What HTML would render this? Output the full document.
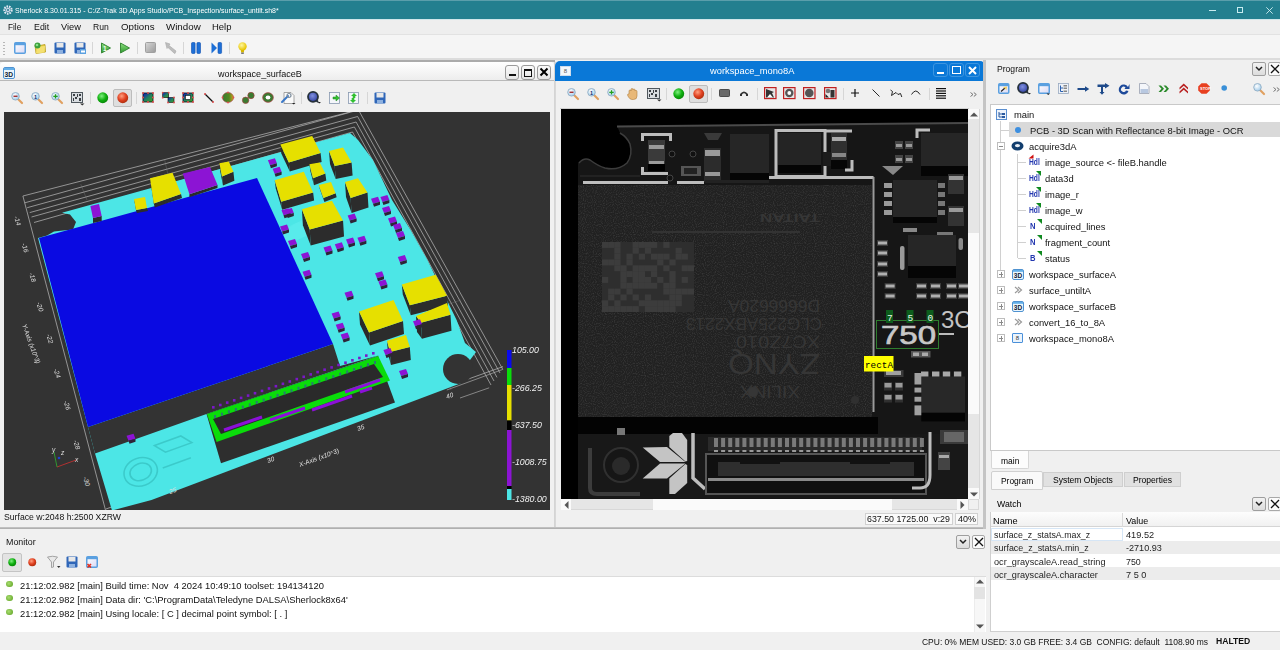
<!DOCTYPE html><html><head><meta charset="utf-8"><style>
*{margin:0;padding:0;box-sizing:border-box}
html,body{width:1280px;height:650px;overflow:hidden;background:#f0f0f0;font-family:"Liberation Sans", sans-serif;color:#000}
.a{position:absolute}
.t{position:absolute;white-space:pre;transform-origin:0 0}
svg{position:absolute;overflow:visible}
</style></head><body>
<div class="a" style="left:0px;top:0px;width:1280px;height:19px;background:#237f8f"></div>
<div class="a" style="left:0px;top:0px;width:1280px;height:1px;background:#5a9eab"></div>
<div class="a" style="left:0px;top:19px;width:1280px;height:1px;background:#cfe6ea"></div>
<div class="t" style="left:15.2px;top:6.64px;font-size:7.4px;line-height:7.4px;transform:scaleX(0.9476);color:#fff">Sherlock 8.30.01.315 - C:/Z-Trak 3D Apps Studio/PCB_Inspection/surface_untilt.sh8*</div>
<svg style="left:3px;top:5px" width="10" height="10" viewBox="0 0 10 10"><circle cx="5" cy="5" r="3.6" fill="none" stroke="#dfe6f2" stroke-width="2.2" stroke-dasharray="1.6 0.9"/><circle cx="5" cy="5" r="2.2" fill="#c9d3e6"/><circle cx="5" cy="5" r="1" fill="#237f8f"/></svg>
<div class="a" style="left:1209px;top:10px;width:7px;height:1px;background:#c8ecf0"></div>
<div class="a" style="left:1237px;top:7px;width:6px;height:6px;border:1px solid #c8ecf0"></div>
<svg style="left:1265.5px;top:7px" width="7" height="7"><path d="M0.3 0.3L6.7 6.7M6.7 0.3L0.3 6.7" stroke="#d0eef2" stroke-width="0.9"/></svg>
<div class="a" style="left:0px;top:20px;width:1280px;height:14px;background:#eeeeee"></div>
<div class="a" style="left:0px;top:34px;width:1280px;height:1px;background:#e2e2e2"></div>
<div class="t" style="left:7.7px;top:23.45px;font-size:8.8px;line-height:8.8px;transform:scaleX(0.9379);color:#111">File</div>
<div class="t" style="left:33.5px;top:23.45px;font-size:8.8px;line-height:8.8px;transform:scaleX(1.0024);color:#111">Edit</div>
<div class="t" style="left:61.4px;top:23.45px;font-size:8.8px;line-height:8.8px;transform:scaleX(1.0520);color:#111">View</div>
<div class="t" style="left:93.2px;top:23.45px;font-size:8.8px;line-height:8.8px;transform:scaleX(0.9787);color:#111">Run</div>
<div class="t" style="left:121px;top:23.45px;font-size:8.8px;line-height:8.8px;transform:scaleX(1.1079);color:#111">Options</div>
<div class="t" style="left:166px;top:23.45px;font-size:8.8px;line-height:8.8px;transform:scaleX(1.1087);color:#111">Window</div>
<div class="t" style="left:212.4px;top:23.45px;font-size:8.8px;line-height:8.8px;transform:scaleX(1.0774);color:#111">Help</div>
<div class="a" style="left:0px;top:35px;width:1280px;height:23px;background:#f5f5f5"></div>
<div class="a" style="left:0px;top:58px;width:1280px;height:2px;background:#dcdcdc"></div>
<div class="a" style="left:0px;top:60px;width:555px;height:2px;background:#ababab"></div>
<div class="a" style="left:0px;top:62px;width:555px;height:466px;background:#f0f0f0;border-right:1px solid #d4d4d4"></div>
<div class="a" style="left:0px;top:62px;width:554px;height:19px;background:linear-gradient(#ffffff,#ececec);border-radius:4px 4px 0 0"></div>
<div class="a" style="left:0px;top:80px;width:554px;height:1px;background:#b9b9b9"></div>
<div class="t" style="left:218.4px;top:69.24px;font-size:9.4px;line-height:9.4px;transform:scaleX(0.9627);color:#111">workspace_surfaceB</div>
<svg style="left:3px;top:67px" width="12" height="12"><rect x="0.5" y="0.5" width="11" height="11" rx="1.5" fill="#eaf6fe" stroke="#4f92d0"/><rect x="1" y="1" width="10" height="2" fill="#62aee8"/><text x="1.6" y="9.8" font-family="Liberation Sans" font-weight="bold" font-size="7" fill="#111a33" textLength="8.6" lengthAdjust="spacingAndGlyphs">3D</text></svg>
<div class="a" style="left:505px;top:65px;width:14px;height:15px;background:linear-gradient(#fafafa,#e6e6e6);border:1px solid #9a9a9a;border-radius:3px"></div>
<div class="a" style="left:521px;top:65px;width:14px;height:15px;background:linear-gradient(#fafafa,#e6e6e6);border:1px solid #9a9a9a;border-radius:3px"></div>
<div class="a" style="left:537px;top:65px;width:14px;height:15px;background:linear-gradient(#fafafa,#e6e6e6);border:1px solid #9a9a9a;border-radius:3px"></div>
<div class="a" style="left:509px;top:74px;width:7px;height:2px;background:#111"></div>
<div class="a" style="left:524px;top:69px;width:8px;height:8px;border:1px solid #111;border-top-width:2px"></div>
<svg style="left:540px;top:68px" width="8" height="8"><path d="M0.5 0.5L7.5 7.5M7.5 0.5L0.5 7.5" stroke="#000" stroke-width="2"/></svg>
<div class="a" style="left:4px;top:112px;width:546px;height:398px;background:#333333"></div>
<div class="t" style="left:4px;top:513.18px;font-size:9.0px;line-height:9.0px;transform:scaleX(0.9637);color:#111">Surface w:2048 h:2500 XZRW</div>
<div class="a" style="left:0px;top:527px;width:555px;height:2px;background:linear-gradient(#c8c8c8,#a8a8a8)"></div>
<div class="a" style="left:555px;top:62px;width:430px;height:466px;background:#f0f0f0;border-left:1px solid #d8d8d8;border-right:1px solid #d8d8d8"></div>
<div class="a" style="left:555px;top:61px;width:430px;height:20px;background:#0a78d7;border-radius:5px 5px 0 0"></div>
<div class="t" style="left:710.2px;top:65.74px;font-size:9.4px;line-height:9.4px;transform:scaleX(0.9933);color:#fff">workspace_mono8A</div>
<div class="a" style="left:560px;top:66px;width:11px;height:10px;background:#f4f7fb;border:1px solid #cfdcec;font-size:6px;line-height:8px;text-align:center;color:#555">8</div>
<div class="a" style="left:933px;top:63px;width:15px;height:14px;background:#0a78d7;border:1px solid #3d95e0;border-radius:3px"></div>
<div class="a" style="left:949px;top:63px;width:15px;height:14px;background:#0a78d7;border:1px solid #3d95e0;border-radius:3px"></div>
<div class="a" style="left:965px;top:63px;width:15px;height:14px;background:#0a78d7;border:1px solid #3d95e0;border-radius:3px"></div>
<div class="a" style="left:937px;top:72px;width:7px;height:2px;background:#fff"></div>
<div class="a" style="left:952px;top:66px;width:9px;height:8px;border:1.5px solid #fff"></div>
<svg style="left:968px;top:66px" width="9" height="9"><path d="M1 1L8 8M8 1L1 8" stroke="#fff" stroke-width="2"/></svg>
<div class="a" style="left:561px;top:109px;width:407px;height:390px;background:#000"></div>
<div class="a" style="left:560px;top:108px;width:409px;height:1px;background:#cfcfcf"></div>
<div class="a" style="left:968px;top:109px;width:12px;height:390px;background:#e6e6e6;border-right:1px solid #d8d8d8"></div>
<div class="a" style="left:968px;top:109px;width:11px;height:10px;background:#fafafa"></div>
<svg style="left:970px;top:112px" width="8" height="5"><path d="M0 4.5L4 0.5L8 4.5Z" fill="#555"/></svg>
<div class="a" style="left:968px;top:233px;width:11px;height:181px;background:#fafafa"></div>
<div class="a" style="left:968px;top:488px;width:11px;height:11px;background:#fafafa"></div>
<svg style="left:970px;top:491.5px" width="8" height="5"><path d="M0 0.5L4 4.5L8 0.5Z" fill="#555"/></svg>
<div class="a" style="left:561px;top:499px;width:407px;height:11px;background:#e6e6e6;border-bottom:1px solid #d8d8d8"></div>
<div class="a" style="left:561px;top:499px;width:10px;height:11px;background:#fafafa"></div>
<svg style="left:564px;top:501px" width="5" height="8"><path d="M4.5 0L0.5 4L4.5 8Z" fill="#555"/></svg>
<div class="a" style="left:653px;top:499px;width:239px;height:11px;background:#fafafa"></div>
<div class="a" style="left:957px;top:499px;width:11px;height:11px;background:#fafafa"></div>
<svg style="left:960px;top:501px" width="5" height="8"><path d="M0.5 0L4.5 4L0.5 8Z" fill="#555"/></svg>
<div class="a" style="left:968px;top:499px;width:11px;height:11px;background:#f0f0f0;border:1px solid #d8d8d8"></div>
<div class="a" style="left:865px;top:513px;width:88px;height:12px;background:#fafafa;border:1px solid #d0d0d0"></div>
<div class="t" style="left:867px;top:514.71px;font-size:9.2px;line-height:9.2px;transform:scaleX(0.9601);color:#111">637.50 1725.00  v:29</div>
<div class="a" style="left:955px;top:513px;width:23px;height:12px;background:#fafafa;border:1px solid #d0d0d0"></div>
<div class="t" style="left:958px;top:514.71px;font-size:9.2px;line-height:9.2px;transform:scaleX(0.9775);color:#111">40%</div>
<div class="a" style="left:555px;top:527px;width:430px;height:2px;background:linear-gradient(#c8c8c8,#a8a8a8)"></div>
<div class="a" style="left:983px;top:60px;width:3px;height:469px;background:#c4c4c4"></div>
<div class="a" style="left:987px;top:62px;width:293px;height:570px;background:#f0f0f0"></div>
<div class="t" style="left:996.5px;top:65.01px;font-size:9.2px;line-height:9.2px;transform:scaleX(0.9354);color:#111">Program</div>
<div class="a" style="left:1252px;top:62px;width:14px;height:14px;background:linear-gradient(#f2f2f2,#dcdcdc);border:1px solid #9e9e9e;border-radius:2px"></div>
<svg style="left:1255px;top:66px" width="8" height="6"><path d="M1 1L4 4L7 1" fill="none" stroke="#222" stroke-width="1.5"/></svg>
<div class="a" style="left:1267.5px;top:62px;width:13.5px;height:14px;background:#fbfbfb;border:1px solid #a8a8a8;border-radius:2px"></div>
<svg style="left:1269.5px;top:64px" width="10" height="10"><path d="M1 1L9 9M9 1L1 9" stroke="#111" stroke-width="1.3"/></svg>
<div class="a" style="left:990px;top:104px;width:290px;height:347px;background:#fff;border:1px solid #c9c9c9;border-right:none"></div>
<div class="a" style="left:991px;top:451px;width:38px;height:18px;background:#fcfcfc;border:1px solid #d6d6d6;border-top:none;border-radius:0 0 2px 2px"></div>
<div class="t" style="left:1000.6px;top:456.24px;font-size:9.4px;line-height:9.4px;transform:scaleX(0.9031);">main</div>
<div class="a" style="left:991px;top:471px;width:52px;height:19px;background:#f9f9f9;border:1px solid #d0d0d0;border-radius:2px 2px 0 0"></div>
<div class="t" style="left:1000.6px;top:476.04px;font-size:9.4px;line-height:9.4px;transform:scaleX(0.8988);">Program</div>
<div class="a" style="left:1043px;top:472px;width:80px;height:15px;background:#e1e1e1;border:1px solid #cfcfcf"></div>
<div class="t" style="left:1053px;top:475.44px;font-size:9.4px;line-height:9.4px;transform:scaleX(0.9116);">System Objects</div>
<div class="a" style="left:1124px;top:472px;width:57px;height:15px;background:#e1e1e1;border:1px solid #cfcfcf"></div>
<div class="t" style="left:1132.6px;top:475.44px;font-size:9.4px;line-height:9.4px;transform:scaleX(0.9126);">Properties</div>
<div class="t" style="left:996.7px;top:498.94px;font-size:9.4px;line-height:9.4px;transform:scaleX(0.9319);">Watch</div>
<div class="a" style="left:1252px;top:497px;width:14px;height:14px;background:linear-gradient(#f2f2f2,#dcdcdc);border:1px solid #9e9e9e;border-radius:2px"></div>
<svg style="left:1255px;top:501px" width="8" height="6"><path d="M1 1L4 4L7 1" fill="none" stroke="#222" stroke-width="1.5"/></svg>
<div class="a" style="left:1267.5px;top:497px;width:13.5px;height:14px;background:#fbfbfb;border:1px solid #a8a8a8;border-radius:2px"></div>
<svg style="left:1269.5px;top:499px" width="10" height="10"><path d="M1 1L9 9M9 1L1 9" stroke="#111" stroke-width="1.3"/></svg>
<div class="a" style="left:990px;top:512px;width:290px;height:120px;background:#fff;border:1px solid #cfcfcf;border-right:none"></div>
<div class="a" style="left:991px;top:512px;width:289px;height:15px;background:linear-gradient(#fdfdfd,#f1f1f1);border-bottom:1px solid #d5d5d5"></div>
<div class="a" style="left:1122px;top:513px;width:1px;height:14px;background:#dadada"></div>
<div class="t" style="left:993.4px;top:516.44px;font-size:9.4px;line-height:9.4px;transform:scaleX(0.9810);">Name</div>
<div class="t" style="left:1125.6px;top:516.44px;font-size:9.4px;line-height:9.4px;transform:scaleX(0.9510);">Value</div>
<div class="a" style="left:991px;top:527.4px;width:289px;height:13.1px;background:#fff"></div>
<div class="t" style="left:993.5px;top:530.34px;font-size:9.4px;line-height:9.4px;transform:scaleX(0.9414);color:#1e1e1e">surface_z_statsA.max_z</div>
<div class="t" style="left:1125.8px;top:530.34px;font-size:9.4px;line-height:9.4px;transform:scaleX(0.9808);color:#1e1e1e">419.52</div>
<div class="a" style="left:991px;top:540.5px;width:289px;height:13.1px;background:#ececec"></div>
<div class="t" style="left:993.5px;top:543.44px;font-size:9.4px;line-height:9.4px;transform:scaleX(0.9520);color:#1e1e1e">surface_z_statsA.min_z</div>
<div class="t" style="left:1126.4px;top:543.44px;font-size:9.4px;line-height:9.4px;transform:scaleX(0.9674);color:#1e1e1e">-2710.93</div>
<div class="a" style="left:991px;top:553.6px;width:289px;height:13.1px;background:#fff"></div>
<div class="t" style="left:993.5px;top:556.54px;font-size:9.4px;line-height:9.4px;transform:scaleX(0.9770);color:#1e1e1e">ocr_grayscaleA.read_string</div>
<div class="t" style="left:1126.4px;top:556.54px;font-size:9.4px;line-height:9.4px;transform:scaleX(0.9436);color:#1e1e1e">750</div>
<div class="a" style="left:991px;top:566.6999999999999px;width:289px;height:13.1px;background:#ececec"></div>
<div class="t" style="left:993.5px;top:569.64px;font-size:9.4px;line-height:9.4px;transform:scaleX(0.9767);color:#1e1e1e">ocr_grayscaleA.character</div>
<div class="t" style="left:1126.4px;top:569.64px;font-size:9.4px;line-height:9.4px;transform:scaleX(0.9758);color:#1e1e1e">7 5 0</div>
<div class="a" style="left:991px;top:527.5px;width:132px;height:13px;border:1px solid #d6e6f6"></div>
<div class="t" style="left:5.6px;top:538.27px;font-size:8.9px;line-height:8.9px;transform:scaleX(1.0001);color:#111">Monitor</div>
<div class="a" style="left:956px;top:535px;width:14px;height:14px;background:linear-gradient(#f2f2f2,#dcdcdc);border:1px solid #9e9e9e;border-radius:2px"></div>
<svg style="left:959px;top:539px" width="8" height="6"><path d="M1 1L4 4L7 1" fill="none" stroke="#222" stroke-width="1.5"/></svg>
<div class="a" style="left:971.5px;top:535px;width:13.5px;height:14px;background:#fbfbfb;border:1px solid #a8a8a8;border-radius:2px"></div>
<svg style="left:973.5px;top:537px" width="10" height="10"><path d="M1 1L9 9M9 1L1 9" stroke="#111" stroke-width="1.3"/></svg>
<div class="a" style="left:2px;top:553px;width:20px;height:19px;background:#e3e3e3;border:1px solid #c4c4c4;border-radius:2px"></div>
<div class="a" style="left:0px;top:576px;width:986px;height:56px;background:#fff;border-top:1px solid #dcdcdc"></div>
<div class="a" style="left:6px;top:580.6px;width:6.5px;height:6.5px;border-radius:50%;background:radial-gradient(circle at 40% 40%,#a8dd70,#5a9e1e)"></div>
<div class="t" style="left:20.15px;top:580.64px;font-size:9.4px;line-height:9.4px;transform:scaleX(1.0001);color:#111">21:12:02.982 [main] Build time: Nov  4 2024 10:49:10 toolset: 194134120</div>
<div class="a" style="left:6px;top:594.6px;width:6.5px;height:6.5px;border-radius:50%;background:radial-gradient(circle at 40% 40%,#a8dd70,#5a9e1e)"></div>
<div class="t" style="left:20.15px;top:594.64px;font-size:9.4px;line-height:9.4px;transform:scaleX(1.0001);color:#111">21:12:02.982 [main] Data dir: &#x27;C:\ProgramData\Teledyne DALSA\Sherlock8x64&#x27;</div>
<div class="a" style="left:6px;top:608.6px;width:6.5px;height:6.5px;border-radius:50%;background:radial-gradient(circle at 40% 40%,#a8dd70,#5a9e1e)"></div>
<div class="t" style="left:20.15px;top:608.64px;font-size:9.4px;line-height:9.4px;transform:scaleX(1.0001);color:#111">21:12:02.982 [main] Using locale: [ C ] decimal point symbol: [ . ]</div>
<div class="a" style="left:974px;top:577px;width:11px;height:55px;background:#f7f7f7;border-left:1px solid #ececec"></div>
<svg style="left:976px;top:579px" width="8" height="5"><path d="M0 4.5L4 0.5L8 4.5Z" fill="#555"/></svg>
<div class="a" style="left:974px;top:587px;width:11px;height:12px;background:#e3e3e3"></div>
<svg style="left:976px;top:624px" width="8" height="5"><path d="M0 0.5L4 4.5L8 0.5Z" fill="#555"/></svg>
<div class="a" style="left:0px;top:632px;width:1280px;height:18px;background:#f0f0f0"></div>
<div class="t" style="left:922px;top:637.68px;font-size:9.0px;line-height:9.0px;transform:scaleX(0.9410);color:#111">CPU: 0% MEM USED: 3.0 GB FREE: 3.4 GB  CONFIG: default  1108.90 ms</div>
<div class="t" style="left:1216.25px;top:637.47px;font-size:8.9px;line-height:8.9px;font-weight:bold;transform:scaleX(0.9709);color:#111">HALTED</div>
<svg style="left:4px;top:112px" width="546" height="398" viewBox="4 112 546 398"><defs><clipPath id="c3"><rect x="4" y="112" width="546" height="398"/></clipPath></defs><g clip-path="url(#c3)">
<rect x="4" y="112" width="546" height="398" fill="#333333"/>
<line x1="22.9" y1="196" x2="349.9" y2="112" stroke="#bdbdbd" stroke-width="0.7"/>
<polyline points="24.8,202.8 380,104" fill="none" stroke="#bdbdbd" stroke-width="0.7"/>
<line x1="359.6" y1="112" x2="502.8" y2="369.4" stroke="#bdbdbd" stroke-width="0.7"/>
<polyline points="27.2,207.7 357.6,116.5 500.0,373.0" fill="none" stroke="#bdbdbd" stroke-width="0.7"/>
<polyline points="29.7,212.6 356.1,122.0 497.0,377.4" fill="none" stroke="#bdbdbd" stroke-width="0.7"/>
<polyline points="31.5,217.0 354.4,127.0 494.0,381.0" fill="none" stroke="#bdbdbd" stroke-width="0.7"/>
<polyline points="34.0,222.5 352.5,132.0 491.0,385.0" fill="none" stroke="#bdbdbd" stroke-width="0.7"/>
<line x1="502.8" y1="369.4" x2="446.8" y2="390" stroke="#bdbdbd" stroke-width="0.6"/>
<line x1="489.2" y1="387.8" x2="460" y2="398" stroke="#bdbdbd" stroke-width="0.6"/>
<line x1="22.9" y1="196" x2="106" y2="512" stroke="#bdbdbd" stroke-width="0.7"/>
<line x1="106" y1="509" x2="503" y2="366.6" stroke="#bdbdbd" stroke-width="0.7"/>
<line x1="152" y1="407.6" x2="460.7" y2="300" stroke="#8a8a8a" stroke-width="0.5" opacity="0.6"/>
<line x1="150.7" y1="406" x2="160" y2="445" stroke="#8a8a8a" stroke-width="0.5" opacity="0.6"/>
<line x1="258" y1="380" x2="270" y2="455" stroke="#8a8a8a" stroke-width="0.5" opacity="0.6"/>
<line x1="345" y1="350" x2="362" y2="421" stroke="#8a8a8a" stroke-width="0.5" opacity="0.6"/>
<line x1="430" y1="322" x2="451" y2="390" stroke="#8a8a8a" stroke-width="0.5" opacity="0.6"/>
<line x1="63" y1="250" x2="351" y2="150" stroke="#8a8a8a" stroke-width="0.5" opacity="0.6"/>
<line x1="80.7" y1="184" x2="87" y2="200" stroke="#8a8a8a" stroke-width="0.5" opacity="0.6"/>
<line x1="164.7" y1="160" x2="168" y2="175" stroke="#8a8a8a" stroke-width="0.5" opacity="0.6"/>
<line x1="80" y1="300" x2="300" y2="220" stroke="#8a8a8a" stroke-width="0.5" opacity="0.6"/>
<polygon points="38.0,238.0 47.0,235.5 54.0,231.5 63.0,230.5 73.0,229.5 76.0,222.0 70.0,214.5 62.0,212.8 350.0,133.0 358.0,140.0 372.9,160.0 392.0,200.0 410.6,230.0 427.4,260.0 456.6,320.0 465.0,343.0 476.0,352.0 470.0,360.0 461.0,383.0 457.5,384.6 151.5,500.0 112.0,510.5 95.0,453.5 88.0,427.0" fill="#4ce6e6"/>
<g transform="rotate(-20 140 470)" fill="none" stroke="#38c4c4" stroke-width="1.6" opacity="0.8"><ellipse cx="140" cy="472" rx="17" ry="14"/><ellipse cx="140" cy="472" rx="11" ry="8.5"/><path d="M162 452 L190 452 L198 462 L170 462 Z"/><path d="M162 476 L192 476"/></g>
<g opacity="0.35"><ellipse cx="300" cy="230" rx="30" ry="8" fill="#70f4f4" transform="rotate(-25 300 230)"/><ellipse cx="420" cy="300" rx="20" ry="6" fill="#70f4f4" transform="rotate(60 420 300)"/></g>
<polygon points="88.0,427.0 333.0,344.0 340.0,366.0 380.0,355.0 206.5,414.0 95.0,453.5" fill="#333333"/>
<circle cx="458" cy="369" r="15" fill="#333333"/>
<rect x="440" y="362" width="40" height="16" fill="none"/>
<polygon points="39.0,238.0 257.0,178.0 333.0,344.0 88.0,427.0" fill="#0a0ae2"/>
<polygon points="206.5,414.0 378.0,356.0 395.0,402.6 221.0,463.3" fill="#2e2e2e"/>
<polygon points="206.9,414.0 378.2,355.9 390.0,380.6 216.6,442.0" fill="#0adc0a"/>
<polygon points="213.0,419.0 374.0,364.0 383.0,377.0 221.0,434.0" fill="#2a2a2a"/>
<line x1="224" y1="430" x2="262" y2="417" stroke="#8c10d8" stroke-width="3"/>
<line x1="270" y1="420" x2="305" y2="408" stroke="#8c10d8" stroke-width="3"/>
<line x1="312" y1="410" x2="352" y2="396" stroke="#8c10d8" stroke-width="3"/>
<line x1="360" y1="392" x2="372" y2="388" stroke="#8c10d8" stroke-width="3"/>
<line x1="345" y1="392" x2="380" y2="380" stroke="#8c10d8" stroke-width="3"/>
<rect x="212.0" y="406.0" width="2.6" height="2.6" fill="#7a18c8"/>
<rect x="214.0" y="415.0" width="2" height="3" fill="#2a7a70"/>
<rect x="219.0" y="403.7" width="2.6" height="2.6" fill="#7a18c8"/>
<rect x="221.0" y="412.7" width="2" height="3" fill="#2a7a70"/>
<rect x="225.9" y="401.3" width="2.6" height="2.6" fill="#7a18c8"/>
<rect x="227.9" y="410.3" width="2" height="3" fill="#2a7a70"/>
<rect x="232.9" y="399.0" width="2.6" height="2.6" fill="#7a18c8"/>
<rect x="234.9" y="408.0" width="2" height="3" fill="#2a7a70"/>
<rect x="239.8" y="396.6" width="2.6" height="2.6" fill="#7a18c8"/>
<rect x="241.8" y="405.6" width="2" height="3" fill="#2a7a70"/>
<rect x="246.8" y="394.3" width="2.6" height="2.6" fill="#7a18c8"/>
<rect x="248.8" y="403.3" width="2" height="3" fill="#2a7a70"/>
<rect x="253.7" y="391.9" width="2.6" height="2.6" fill="#7a18c8"/>
<rect x="255.7" y="400.9" width="2" height="3" fill="#2a7a70"/>
<rect x="260.7" y="389.6" width="2.6" height="2.6" fill="#7a18c8"/>
<rect x="262.7" y="398.6" width="2" height="3" fill="#2a7a70"/>
<rect x="267.7" y="387.2" width="2.6" height="2.6" fill="#7a18c8"/>
<rect x="269.7" y="396.2" width="2" height="3" fill="#2a7a70"/>
<rect x="274.6" y="384.9" width="2.6" height="2.6" fill="#7a18c8"/>
<rect x="276.6" y="393.9" width="2" height="3" fill="#2a7a70"/>
<rect x="281.6" y="382.5" width="2.6" height="2.6" fill="#7a18c8"/>
<rect x="283.6" y="391.5" width="2" height="3" fill="#2a7a70"/>
<rect x="288.5" y="380.2" width="2.6" height="2.6" fill="#7a18c8"/>
<rect x="290.5" y="389.2" width="2" height="3" fill="#2a7a70"/>
<rect x="295.5" y="377.8" width="2.6" height="2.6" fill="#7a18c8"/>
<rect x="297.5" y="386.8" width="2" height="3" fill="#2a7a70"/>
<rect x="302.4" y="375.5" width="2.6" height="2.6" fill="#7a18c8"/>
<rect x="304.4" y="384.5" width="2" height="3" fill="#2a7a70"/>
<rect x="309.4" y="373.1" width="2.6" height="2.6" fill="#7a18c8"/>
<rect x="311.4" y="382.1" width="2" height="3" fill="#2a7a70"/>
<rect x="316.3" y="370.8" width="2.6" height="2.6" fill="#7a18c8"/>
<rect x="318.3" y="379.8" width="2" height="3" fill="#2a7a70"/>
<rect x="323.3" y="368.4" width="2.6" height="2.6" fill="#7a18c8"/>
<rect x="325.3" y="377.4" width="2" height="3" fill="#2a7a70"/>
<rect x="330.3" y="366.1" width="2.6" height="2.6" fill="#7a18c8"/>
<rect x="332.3" y="375.1" width="2" height="3" fill="#2a7a70"/>
<rect x="337.2" y="363.7" width="2.6" height="2.6" fill="#7a18c8"/>
<rect x="339.2" y="372.7" width="2" height="3" fill="#2a7a70"/>
<rect x="344.2" y="361.4" width="2.6" height="2.6" fill="#7a18c8"/>
<rect x="346.2" y="370.4" width="2" height="3" fill="#2a7a70"/>
<rect x="351.1" y="359.0" width="2.6" height="2.6" fill="#7a18c8"/>
<rect x="353.1" y="368.0" width="2" height="3" fill="#2a7a70"/>
<rect x="358.1" y="356.7" width="2.6" height="2.6" fill="#7a18c8"/>
<rect x="360.1" y="365.7" width="2" height="3" fill="#2a7a70"/>
<rect x="365.0" y="354.3" width="2.6" height="2.6" fill="#7a18c8"/>
<rect x="367.0" y="363.3" width="2" height="3" fill="#2a7a70"/>
<rect x="372.0" y="352.0" width="2.6" height="2.6" fill="#7a18c8"/>
<rect x="374.0" y="361.0" width="2" height="3" fill="#2a7a70"/>
<polygon points="288.8,162.4 320.6,153.0 321.6,162.0 289.8,171.4" fill="#2c2c2c"/>
<polygon points="280.3,144.6 288.8,162.4 289.8,171.4 281.3,153.6" fill="#2a2a2a"/>
<polygon points="280.3,144.6 312.2,136.0 320.6,153.0 288.8,162.4" fill="#e6e000"/>
<polygon points="153.8,203.6 181.0,194.0 182.0,198.0 154.8,207.6" fill="#2c2c2c"/>
<polygon points="150.0,178.3 153.8,203.6 154.8,207.6 151.0,182.3" fill="#2a2a2a"/>
<polygon points="150.0,178.3 172.5,172.7 181.0,194.0 153.8,203.6" fill="#e6e000"/>
<polygon points="222.0,176.4 233.4,171.8 234.4,180.8 223.0,185.4" fill="#2c2c2c"/>
<polygon points="219.4,163.3 222.0,176.4 223.0,185.4 220.4,172.3" fill="#2a2a2a"/>
<polygon points="219.4,163.3 228.8,161.4 233.4,171.8 222.0,176.4" fill="#e6e000"/>
<polygon points="281.2,201.8 313.1,192.4 314.1,200.4 282.2,209.8" fill="#2c2c2c"/>
<polygon points="274.7,180.2 281.2,201.8 282.2,209.8 275.7,188.2" fill="#2a2a2a"/>
<polygon points="274.7,180.2 303.8,171.8 313.1,192.4 281.2,201.8" fill="#e6e000"/>
<polygon points="313.0,178.3 325.3,173.6 326.3,180.6 314.0,185.3" fill="#2c2c2c"/>
<polygon points="309.4,164.2 313.0,178.3 314.0,185.3 310.4,171.2" fill="#2a2a2a"/>
<polygon points="309.4,164.2 319.7,162.4 325.3,173.6 313.0,178.3" fill="#e6e000"/>
<polygon points="323.4,198.0 335.6,193.3 336.6,197.3 324.4,202.0" fill="#2c2c2c"/>
<polygon points="318.8,184.9 323.4,198.0 324.4,202.0 319.8,188.9" fill="#2a2a2a"/>
<polygon points="318.8,184.9 331.0,182.0 335.6,193.3 323.4,198.0" fill="#e6e000"/>
<polygon points="334.7,166.0 351.6,162.4 352.6,175.4 335.7,179.0" fill="#2c2c2c"/>
<polygon points="329.0,151.0 334.7,166.0 335.7,179.0 330.0,164.0" fill="#2a2a2a"/>
<polygon points="329.0,151.0 343.0,147.4 351.6,162.4 334.7,166.0" fill="#e6e000"/>
<polygon points="350.6,198.0 367.5,192.4 368.5,207.4 351.6,213.0" fill="#2c2c2c"/>
<polygon points="345.0,182.0 350.6,198.0 351.6,213.0 346.0,197.0" fill="#2a2a2a"/>
<polygon points="345.0,182.0 358.0,178.3 367.5,192.4 350.6,198.0" fill="#e6e000"/>
<polygon points="309.7,229.5 343.0,220.5 344.0,236.5 310.7,245.5" fill="#2c2c2c"/>
<polygon points="301.9,209.2 309.7,229.5 310.7,245.5 302.9,225.2" fill="#2a2a2a"/>
<polygon points="301.9,209.2 331.9,200.8 343.0,220.5 309.7,229.5" fill="#e6e000"/>
<polygon points="136.0,210.0 147.0,208.0 148.0,211.0 137.0,213.0" fill="#2c2c2c"/>
<polygon points="134.0,199.0 136.0,210.0 137.0,213.0 135.0,202.0" fill="#2a2a2a"/>
<polygon points="134.0,199.0 145.0,197.0 147.0,208.0 136.0,210.0" fill="#e6e000"/>
<polygon points="409.8,305.3 447.0,295.7 448.0,305.7 410.8,315.3" fill="#2c2c2c"/>
<polygon points="401.8,284.4 409.8,305.3 410.8,315.3 402.8,294.4" fill="#2a2a2a"/>
<polygon points="401.8,284.4 435.7,274.7 447.0,295.7 409.8,305.3" fill="#e6e000"/>
<polygon points="369.0,332.6 403.0,321.0 404.0,334.0 370.0,345.6" fill="#2c2c2c"/>
<polygon points="359.0,311.4 369.0,332.6 370.0,345.6 360.0,324.4" fill="#2a2a2a"/>
<polygon points="359.0,311.4 393.5,300.0 403.0,321.0 369.0,332.6" fill="#e6e000"/>
<polygon points="421.0,322.8 450.5,314.7 451.5,330.7 422.0,338.8" fill="#2c2c2c"/>
<polygon points="416.0,316.0 421.0,322.8 422.0,338.8 417.0,332.0" fill="#2a2a2a"/>
<polygon points="416.0,316.0 447.0,303.0 450.5,314.7 421.0,322.8" fill="#e6e000"/>
<polygon points="390.0,352.0 409.8,347.0 410.8,360.0 391.0,365.0" fill="#2c2c2c"/>
<polygon points="387.0,340.8 390.0,352.0 391.0,365.0 388.0,353.8" fill="#2a2a2a"/>
<polygon points="387.0,340.8 406.0,335.0 409.8,347.0 390.0,352.0" fill="#e6e000"/>
<polygon points="189.4,194.2 217.5,184.9 217.5,187.9 189.4,197.2" fill="#2a2a2a"/>
<polygon points="182.8,173.6 210.0,167.0 217.5,184.9 189.4,194.2" fill="#8c14d4"/>
<polygon points="93.0,218.0 101.7,216.0 101.7,221.0 93.0,223.0" fill="#2a2a2a"/>
<polygon points="90.4,206.0 99.0,204.0 101.7,216.0 93.0,218.0" fill="#8c14d4"/>
<polygon points="267.9,160.3 274.9,158.3 276.9,163.3 269.9,165.3" fill="#8c14d4"/>
<polygon points="269.9,165.3 276.9,163.3 276.9,166.3 270.9,168.3" fill="#2e2438"/>
<polygon points="272.6,168.8 279.6,166.8 281.6,171.8 274.6,173.8" fill="#8c14d4"/>
<polygon points="274.6,173.8 281.6,171.8 281.6,174.8 275.6,176.8" fill="#2e2438"/>
<polygon points="284.8,210.0 291.8,208.0 293.8,213.0 286.8,215.0" fill="#8c14d4"/>
<polygon points="286.8,215.0 293.8,213.0 293.8,216.0 287.8,218.0" fill="#2e2438"/>
<polygon points="371.0,198.8 378.0,196.8 380.0,201.8 373.0,203.8" fill="#8c14d4"/>
<polygon points="373.0,203.8 380.0,201.8 380.0,204.8 374.0,206.8" fill="#2e2438"/>
<polygon points="380.4,196.9 387.4,194.9 389.4,199.9 382.4,201.9" fill="#8c14d4"/>
<polygon points="382.4,201.9 389.4,199.9 389.4,202.9 383.4,204.9" fill="#2e2438"/>
<polygon points="382.0,208.0 389.0,206.0 391.0,211.0 384.0,213.0" fill="#8c14d4"/>
<polygon points="384.0,213.0 391.0,211.0 391.0,214.0 385.0,216.0" fill="#2e2438"/>
<polygon points="347.6,215.6 354.6,213.6 356.6,218.6 349.6,220.6" fill="#8c14d4"/>
<polygon points="349.6,220.6 356.6,218.6 356.6,221.6 350.6,223.6" fill="#2e2438"/>
<polygon points="281.5,210.3 288.5,208.3 290.5,213.3 283.5,215.3" fill="#8c14d4"/>
<polygon points="283.5,215.3 290.5,213.3 290.5,216.3 284.5,218.3" fill="#2e2438"/>
<polygon points="280.0,226.5 287.0,224.5 289.0,229.5 282.0,231.5" fill="#8c14d4"/>
<polygon points="282.0,231.5 289.0,229.5 289.0,232.5 283.0,234.5" fill="#2e2438"/>
<polygon points="288.0,241.0 295.0,239.0 297.0,244.0 290.0,246.0" fill="#8c14d4"/>
<polygon points="290.0,246.0 297.0,244.0 297.0,247.0 291.0,249.0" fill="#2e2438"/>
<polygon points="301.0,254.0 308.0,252.0 310.0,257.0 303.0,259.0" fill="#8c14d4"/>
<polygon points="303.0,259.0 310.0,257.0 310.0,260.0 304.0,262.0" fill="#2e2438"/>
<polygon points="302.5,271.7 309.5,269.7 311.5,274.7 304.5,276.7" fill="#8c14d4"/>
<polygon points="304.5,276.7 311.5,274.7 311.5,277.7 305.5,279.7" fill="#2e2438"/>
<polygon points="331.6,313.6 338.6,311.6 340.6,316.6 333.6,318.6" fill="#8c14d4"/>
<polygon points="333.6,318.6 340.6,316.6 340.6,319.6 334.6,321.6" fill="#2e2438"/>
<polygon points="388.0,218.4 395.0,216.4 397.0,221.4 390.0,223.4" fill="#8c14d4"/>
<polygon points="390.0,223.4 397.0,221.4 397.0,224.4 391.0,226.4" fill="#2e2438"/>
<polygon points="393.0,225.0 400.0,223.0 402.0,228.0 395.0,230.0" fill="#8c14d4"/>
<polygon points="395.0,230.0 402.0,228.0 402.0,231.0 396.0,233.0" fill="#2e2438"/>
<polygon points="396.0,233.0 403.0,231.0 405.0,236.0 398.0,238.0" fill="#8c14d4"/>
<polygon points="398.0,238.0 405.0,236.0 405.0,239.0 399.0,241.0" fill="#2e2438"/>
<polygon points="323.5,247.5 330.5,245.5 332.5,250.5 325.5,252.5" fill="#8c14d4"/>
<polygon points="325.5,252.5 332.5,250.5 332.5,253.5 326.5,255.5" fill="#2e2438"/>
<polygon points="334.8,244.2 341.8,242.2 343.8,247.2 336.8,249.2" fill="#8c14d4"/>
<polygon points="336.8,249.2 343.8,247.2 343.8,250.2 337.8,252.2" fill="#2e2438"/>
<polygon points="346.0,239.4 353.0,237.4 355.0,242.4 348.0,244.4" fill="#8c14d4"/>
<polygon points="348.0,244.4 355.0,242.4 355.0,245.4 349.0,247.4" fill="#2e2438"/>
<polygon points="357.4,237.8 364.4,235.8 366.4,240.8 359.4,242.8" fill="#8c14d4"/>
<polygon points="359.4,242.8 366.4,240.8 366.4,243.8 360.4,245.8" fill="#2e2438"/>
<polygon points="397.8,257.0 404.8,255.0 406.8,260.0 399.8,262.0" fill="#8c14d4"/>
<polygon points="399.8,262.0 406.8,260.0 406.8,263.0 400.8,265.0" fill="#2e2438"/>
<polygon points="375.0,273.3 382.0,271.3 384.0,276.3 377.0,278.3" fill="#8c14d4"/>
<polygon points="377.0,278.3 384.0,276.3 384.0,279.3 378.0,281.3" fill="#2e2438"/>
<polygon points="378.4,281.4 385.4,279.4 387.4,284.4 380.4,286.4" fill="#8c14d4"/>
<polygon points="380.4,286.4 387.4,284.4 387.4,287.4 381.4,289.4" fill="#2e2438"/>
<polygon points="344.5,292.7 351.5,290.7 353.5,295.7 346.5,297.7" fill="#8c14d4"/>
<polygon points="346.5,297.7 353.5,295.7 353.5,298.7 347.5,300.7" fill="#2e2438"/>
<polygon points="335.7,324.7 342.7,322.7 344.7,327.7 337.7,329.7" fill="#8c14d4"/>
<polygon points="337.7,329.7 344.7,327.7 344.7,330.7 338.7,332.7" fill="#2e2438"/>
<polygon points="340.6,334.5 347.6,332.5 349.6,337.5 342.6,339.5" fill="#8c14d4"/>
<polygon points="342.6,339.5 349.6,337.5 349.6,340.5 343.6,342.5" fill="#2e2438"/>
<polygon points="383.4,350.0 390.4,348.0 392.4,353.0 385.4,355.0" fill="#8c14d4"/>
<polygon points="385.4,355.0 392.4,353.0 392.4,356.0 386.4,358.0" fill="#2e2438"/>
<polygon points="399.0,371.0 406.0,369.0 408.0,374.0 401.0,376.0" fill="#8c14d4"/>
<polygon points="401.0,376.0 408.0,374.0 408.0,377.0 402.0,379.0" fill="#2e2438"/>
<polygon points="413.0,321.3 420.0,319.3 422.0,324.3 415.0,326.3" fill="#8c14d4"/>
<polygon points="415.0,326.3 422.0,324.3 422.0,327.3 416.0,329.3" fill="#2e2438"/>
<polygon points="126.5,435.7 133.5,433.7 135.5,438.7 128.5,440.7" fill="#8c14d4"/>
<polygon points="128.5,440.7 135.5,438.7 135.5,441.7 129.5,443.7" fill="#2e2438"/>
<text x="14" y="217" fill="#e0e0e0" font-family="Liberation Sans" font-size="6.5" font-style="italic" transform="rotate(72 14 217)">-14</text>
<text x="21.5" y="244" fill="#e0e0e0" font-family="Liberation Sans" font-size="6.5" font-style="italic" transform="rotate(72 21.5 244)">-16</text>
<text x="29" y="273.5" fill="#e0e0e0" font-family="Liberation Sans" font-size="6.5" font-style="italic" transform="rotate(72 29 273.5)">-18</text>
<text x="36.4" y="303" fill="#e0e0e0" font-family="Liberation Sans" font-size="6.5" font-style="italic" transform="rotate(72 36.4 303)">-20</text>
<text x="46.3" y="335" fill="#e0e0e0" font-family="Liberation Sans" font-size="6.5" font-style="italic" transform="rotate(72 46.3 335)">-22</text>
<text x="53.6" y="369.5" fill="#e0e0e0" font-family="Liberation Sans" font-size="6.5" font-style="italic" transform="rotate(72 53.6 369.5)">-24</text>
<text x="63.5" y="401.5" fill="#e0e0e0" font-family="Liberation Sans" font-size="6.5" font-style="italic" transform="rotate(72 63.5 401.5)">-26</text>
<text x="73.3" y="441" fill="#e0e0e0" font-family="Liberation Sans" font-size="6.5" font-style="italic" transform="rotate(72 73.3 441)">-28</text>
<text x="83" y="477.5" fill="#e0e0e0" font-family="Liberation Sans" font-size="6.5" font-style="italic" transform="rotate(72 83 477.5)">-30</text>
<text x="22" y="325" fill="#e0e0e0" font-family="Liberation Sans" font-size="6.5" font-style="italic" transform="rotate(70 22 325)">Y-Axis (x10^3)</text>
<text x="300" y="467" fill="#e0e0e0" font-family="Liberation Sans" font-size="6.5" font-style="italic" transform="rotate(-20 300 467)">X-Axis (x10^3)</text>
<text x="170" y="494" fill="#e0e0e0" font-family="Liberation Sans" font-size="6.5" font-style="italic" transform="rotate(-20 170 494)">25</text>
<text x="268" y="463" fill="#e0e0e0" font-family="Liberation Sans" font-size="6.5" font-style="italic" transform="rotate(-20 268 463)">30</text>
<text x="358" y="431" fill="#e0e0e0" font-family="Liberation Sans" font-size="6.5" font-style="italic" transform="rotate(-20 358 431)">35</text>
<text x="447" y="399" fill="#e0e0e0" font-family="Liberation Sans" font-size="6.5" font-style="italic" transform="rotate(-20 447 399)">40</text>
<line x1="57" y1="467" x2="76" y2="460" stroke="#d03030" stroke-width="0.8"/><line x1="57" y1="467" x2="54" y2="452" stroke="#30b030" stroke-width="0.8"/><circle cx="59" cy="458" r="1.3" fill="#2040d0"/>
<text x="52" y="452" fill="#e0e0e0" font-family="Liberation Sans" font-size="6.5" font-style="italic" font-size="5.5">y</text><text x="61" y="455" fill="#e0e0e0" font-family="Liberation Sans" font-size="6.5" font-style="italic" font-size="5.5">z</text><text x="75" y="462" fill="#e0e0e0" font-family="Liberation Sans" font-size="6.5" font-style="italic" font-size="5.5">x</text>
<rect x="507" y="350" width="4.5" height="18" fill="#0a0aec"/>
<rect x="507" y="368" width="4.5" height="17" fill="#0adc0a"/>
<rect x="507" y="385" width="4.5" height="35.5" fill="#e6e000"/>
<rect x="507" y="420.5" width="4.5" height="9.5" fill="#000"/>
<rect x="507" y="430" width="4.5" height="56" fill="#8c14d4"/>
<rect x="507" y="486" width="4.5" height="3" fill="#000"/>
<rect x="507" y="489" width="4.5" height="11" fill="#4ce6e6"/>
<text x="512" y="352.5" fill="#f0f0f0" font-family="Liberation Sans" font-size="8.8" font-style="italic">105.00</text>
<text x="512" y="390.5" fill="#f0f0f0" font-family="Liberation Sans" font-size="8.8" font-style="italic">-266.25</text>
<text x="512" y="427.5" fill="#f0f0f0" font-family="Liberation Sans" font-size="8.8" font-style="italic">-637.50</text>
<text x="512" y="464.5" fill="#f0f0f0" font-family="Liberation Sans" font-size="8.8" font-style="italic">-1008.75</text>
<text x="512" y="502" fill="#f0f0f0" font-family="Liberation Sans" font-size="8.8" font-style="italic">-1380.00</text>
</g></svg>
<svg style="left:561px;top:109px" width="407" height="390" viewBox="561 109 407 390"><defs><clipPath id="cm"><rect x="561" y="109" width="407" height="390"/></clipPath><filter id="nz" x="0" y="0" width="100%" height="100%"><feTurbulence type="fractalNoise" baseFrequency="0.9" numOctaves="1" seed="3"/><feColorMatrix values="0 0 0 0 0.25  0 0 0 0 0.25  0 0 0 0 0.25  0 0 0 1.2 -0.55"/></filter></defs><g clip-path="url(#cm)">
<rect x="561" y="109" width="407" height="390" fill="#000"/>
<path d="M617.5 126.5 L968 123 L968 499 L578 499 L578 163 Q584 157 590 160 Q598 166 605 168 Q618 171 627 163 Q633 155 630 144 Q627 137 620 133 L617.5 127 Z" fill="#161616"/>
<path d="M579 163 Q584 157 590 160 Q598 166 605 168 Q618 171 627 163 Q633 155 630 144 Q627 137 620 133" fill="none" stroke="#3c3c3c" stroke-width="1.5"/><path d="M580 176 L640 176" stroke="#2e2e2e" stroke-width="1"/>
<line x1="617" y1="126.5" x2="968" y2="123" stroke="#4a4a4a" stroke-width="2"/>
<path d="M642.5 141 L642.5 134.5 L670.5 134.5 L670.5 141 M642.5 167 L642.5 173.5 L668 173.5" fill="none" stroke="#bdbdbd" stroke-width="3"/>
<rect x="648" y="140" width="17" height="30" fill="#3a3a3a"/><rect x="649" y="145" width="15" height="4" fill="#9a9a9a"/><rect x="649" y="161" width="15" height="3" fill="#9a9a9a"/><rect x="648" y="164" width="17" height="7" fill="#000"/>
<circle cx="672" cy="154" r="3" fill="#111" stroke="#444" stroke-width="1"/>
<circle cx="693" cy="154" r="3" fill="#111" stroke="#444" stroke-width="1"/>
<circle cx="670" cy="178" r="3" fill="#111" stroke="#444" stroke-width="1"/>
<rect x="681" y="166" width="20" height="10" fill="#555"/><rect x="684" y="168" width="13" height="6" fill="#222"/>
<rect x="704" y="148" width="17" height="34" fill="#2c2c2c"/><rect x="705" y="150" width="15" height="6" fill="#9a9a9a"/><rect x="705" y="172" width="15" height="4" fill="#999"/>
<path d="M704 133 L722 133 L718 140 L708 140 Z" fill="#3a3a3a"/>
<rect x="730" y="134" width="39" height="39" fill="#262626"/><rect x="730" y="173" width="39" height="8" fill="#050505"/>
<rect x="776" y="130.5" width="49" height="46" fill="none" stroke="#bdbdbd" stroke-width="3"/>
<rect x="778" y="133" width="43" height="35" fill="#242424"/><rect x="778" y="165" width="43" height="8" fill="#050505"/>
<rect x="823" y="152" width="8" height="14" fill="#1c1c1c"/>
<rect x="831" y="133" width="16" height="35" fill="#303030"/><rect x="832" y="137" width="14" height="4" fill="#aaa"/><rect x="832" y="153" width="14" height="4" fill="#888"/><rect x="831" y="160" width="16" height="9" fill="#060606"/>
<path d="M826 131 L852 131 M852 160 L852 170 L845 170" fill="none" stroke="#bdbdbd" stroke-width="3"/>
<path d="M583 182.5 L668 182.5 M677 182.5 L704 182.5 M769 177.5 L873.5 177.5" fill="none" stroke="#bdbdbd" stroke-width="3"/>
<path d="M873.5 177 L873.5 412" stroke="#9a9a9a" stroke-width="2"/>
<rect x="578" y="185" width="294" height="232" fill="#212121"/>
<rect x="578" y="185" width="294" height="232" filter="url(#nz)" opacity="0.55"/>
<rect x="705" y="180" width="64" height="3" fill="#222"/>
<rect x="652" y="231" width="148" height="2" fill="#333"/>
<rect x="602" y="242" width="92" height="70" fill="#2e2e2e"/>
<rect x="602.0" y="242.0" width="6.2" height="5.9" fill="#3c3c3c"/>
<rect x="602.0" y="259.5" width="6.2" height="5.9" fill="#3c3c3c"/>
<rect x="602.0" y="277.0" width="6.2" height="5.9" fill="#3c3c3c"/>
<rect x="602.0" y="300.3" width="6.2" height="5.9" fill="#3c3c3c"/>
<rect x="602.0" y="306.1" width="6.2" height="5.9" fill="#3c3c3c"/>
<rect x="608.1" y="242.0" width="6.2" height="5.9" fill="#3c3c3c"/>
<rect x="608.1" y="259.5" width="6.2" height="5.9" fill="#3c3c3c"/>
<rect x="608.1" y="288.6" width="6.2" height="5.9" fill="#3c3c3c"/>
<rect x="608.1" y="294.5" width="6.2" height="5.9" fill="#3c3c3c"/>
<rect x="608.1" y="306.1" width="6.2" height="5.9" fill="#3c3c3c"/>
<rect x="614.3" y="242.0" width="6.2" height="5.9" fill="#3c3c3c"/>
<rect x="614.3" y="247.8" width="6.2" height="5.9" fill="#3c3c3c"/>
<rect x="614.3" y="253.7" width="6.2" height="5.9" fill="#3c3c3c"/>
<rect x="614.3" y="259.5" width="6.2" height="5.9" fill="#3c3c3c"/>
<rect x="614.3" y="265.3" width="6.2" height="5.9" fill="#3c3c3c"/>
<rect x="614.3" y="288.6" width="6.2" height="5.9" fill="#3c3c3c"/>
<rect x="614.3" y="300.3" width="6.2" height="5.9" fill="#3c3c3c"/>
<rect x="614.3" y="306.1" width="6.2" height="5.9" fill="#3c3c3c"/>
<rect x="620.4" y="265.3" width="6.2" height="5.9" fill="#3c3c3c"/>
<rect x="620.4" y="271.1" width="6.2" height="5.9" fill="#3c3c3c"/>
<rect x="620.4" y="277.0" width="6.2" height="5.9" fill="#3c3c3c"/>
<rect x="620.4" y="282.8" width="6.2" height="5.9" fill="#3c3c3c"/>
<rect x="620.4" y="294.5" width="6.2" height="5.9" fill="#3c3c3c"/>
<rect x="620.4" y="306.1" width="6.2" height="5.9" fill="#3c3c3c"/>
<rect x="626.5" y="253.7" width="6.2" height="5.9" fill="#3c3c3c"/>
<rect x="626.5" y="259.5" width="6.2" height="5.9" fill="#3c3c3c"/>
<rect x="626.5" y="271.1" width="6.2" height="5.9" fill="#3c3c3c"/>
<rect x="626.5" y="282.8" width="6.2" height="5.9" fill="#3c3c3c"/>
<rect x="626.5" y="288.6" width="6.2" height="5.9" fill="#3c3c3c"/>
<rect x="626.5" y="306.1" width="6.2" height="5.9" fill="#3c3c3c"/>
<rect x="632.6" y="242.0" width="6.2" height="5.9" fill="#3c3c3c"/>
<rect x="632.6" y="247.8" width="6.2" height="5.9" fill="#3c3c3c"/>
<rect x="632.6" y="265.3" width="6.2" height="5.9" fill="#3c3c3c"/>
<rect x="632.6" y="271.1" width="6.2" height="5.9" fill="#3c3c3c"/>
<rect x="632.6" y="277.0" width="6.2" height="5.9" fill="#3c3c3c"/>
<rect x="632.6" y="282.8" width="6.2" height="5.9" fill="#3c3c3c"/>
<rect x="632.6" y="294.5" width="6.2" height="5.9" fill="#3c3c3c"/>
<rect x="632.6" y="306.1" width="6.2" height="5.9" fill="#3c3c3c"/>
<rect x="638.8" y="242.0" width="6.2" height="5.9" fill="#3c3c3c"/>
<rect x="638.8" y="253.7" width="6.2" height="5.9" fill="#3c3c3c"/>
<rect x="638.8" y="265.3" width="6.2" height="5.9" fill="#3c3c3c"/>
<rect x="638.8" y="271.1" width="6.2" height="5.9" fill="#3c3c3c"/>
<rect x="638.8" y="277.0" width="6.2" height="5.9" fill="#3c3c3c"/>
<rect x="638.8" y="282.8" width="6.2" height="5.9" fill="#3c3c3c"/>
<rect x="638.8" y="300.3" width="6.2" height="5.9" fill="#3c3c3c"/>
<rect x="644.9" y="242.0" width="6.2" height="5.9" fill="#3c3c3c"/>
<rect x="644.9" y="247.8" width="6.2" height="5.9" fill="#3c3c3c"/>
<rect x="644.9" y="265.3" width="6.2" height="5.9" fill="#3c3c3c"/>
<rect x="644.9" y="277.0" width="6.2" height="5.9" fill="#3c3c3c"/>
<rect x="644.9" y="282.8" width="6.2" height="5.9" fill="#3c3c3c"/>
<rect x="644.9" y="294.5" width="6.2" height="5.9" fill="#3c3c3c"/>
<rect x="644.9" y="300.3" width="6.2" height="5.9" fill="#3c3c3c"/>
<rect x="644.9" y="306.1" width="6.2" height="5.9" fill="#3c3c3c"/>
<rect x="651.0" y="242.0" width="6.2" height="5.9" fill="#3c3c3c"/>
<rect x="651.0" y="253.7" width="6.2" height="5.9" fill="#3c3c3c"/>
<rect x="651.0" y="265.3" width="6.2" height="5.9" fill="#3c3c3c"/>
<rect x="651.0" y="271.1" width="6.2" height="5.9" fill="#3c3c3c"/>
<rect x="651.0" y="282.8" width="6.2" height="5.9" fill="#3c3c3c"/>
<rect x="651.0" y="300.3" width="6.2" height="5.9" fill="#3c3c3c"/>
<rect x="651.0" y="306.1" width="6.2" height="5.9" fill="#3c3c3c"/>
<rect x="657.2" y="253.7" width="6.2" height="5.9" fill="#3c3c3c"/>
<rect x="657.2" y="259.5" width="6.2" height="5.9" fill="#3c3c3c"/>
<rect x="657.2" y="277.0" width="6.2" height="5.9" fill="#3c3c3c"/>
<rect x="657.2" y="300.3" width="6.2" height="5.9" fill="#3c3c3c"/>
<rect x="657.2" y="306.1" width="6.2" height="5.9" fill="#3c3c3c"/>
<rect x="663.3" y="242.0" width="6.2" height="5.9" fill="#3c3c3c"/>
<rect x="663.3" y="253.7" width="6.2" height="5.9" fill="#3c3c3c"/>
<rect x="663.3" y="265.3" width="6.2" height="5.9" fill="#3c3c3c"/>
<rect x="663.3" y="282.8" width="6.2" height="5.9" fill="#3c3c3c"/>
<rect x="663.3" y="288.6" width="6.2" height="5.9" fill="#3c3c3c"/>
<rect x="663.3" y="300.3" width="6.2" height="5.9" fill="#3c3c3c"/>
<rect x="663.3" y="306.1" width="6.2" height="5.9" fill="#3c3c3c"/>
<rect x="669.4" y="259.5" width="6.2" height="5.9" fill="#3c3c3c"/>
<rect x="669.4" y="271.1" width="6.2" height="5.9" fill="#3c3c3c"/>
<rect x="669.4" y="277.0" width="6.2" height="5.9" fill="#3c3c3c"/>
<rect x="669.4" y="282.8" width="6.2" height="5.9" fill="#3c3c3c"/>
<rect x="669.4" y="288.6" width="6.2" height="5.9" fill="#3c3c3c"/>
<rect x="669.4" y="294.5" width="6.2" height="5.9" fill="#3c3c3c"/>
<rect x="669.4" y="300.3" width="6.2" height="5.9" fill="#3c3c3c"/>
<rect x="669.4" y="306.1" width="6.2" height="5.9" fill="#3c3c3c"/>
<rect x="675.6" y="247.8" width="6.2" height="5.9" fill="#3c3c3c"/>
<rect x="675.6" y="253.7" width="6.2" height="5.9" fill="#3c3c3c"/>
<rect x="675.6" y="288.6" width="6.2" height="5.9" fill="#3c3c3c"/>
<rect x="675.6" y="294.5" width="6.2" height="5.9" fill="#3c3c3c"/>
<rect x="675.6" y="300.3" width="6.2" height="5.9" fill="#3c3c3c"/>
<rect x="681.7" y="253.7" width="6.2" height="5.9" fill="#3c3c3c"/>
<rect x="681.7" y="265.3" width="6.2" height="5.9" fill="#3c3c3c"/>
<rect x="681.7" y="277.0" width="6.2" height="5.9" fill="#3c3c3c"/>
<rect x="681.7" y="288.6" width="6.2" height="5.9" fill="#3c3c3c"/>
<rect x="687.8" y="265.3" width="6.2" height="5.9" fill="#3c3c3c"/>
<rect x="687.8" y="288.6" width="6.2" height="5.9" fill="#3c3c3c"/>
<text x="790.0" y="222.0" fill="#363636" font-family="Liberation Sans" font-weight="bold" font-size="11.0" text-anchor="middle" textLength="60" lengthAdjust="spacingAndGlyphs" transform="rotate(180 790.0 218.0)">TAITAN</text>
<text x="774.0" y="312.0" fill="#363636" font-family="Liberation Sans" font-size="16.4" text-anchor="middle" textLength="92" lengthAdjust="spacingAndGlyphs" transform="rotate(180 774.0 306.0)">D6666620A</text>
<text x="754.0" y="330.0" fill="#363636" font-family="Liberation Sans" font-size="16.4" text-anchor="middle" textLength="136" lengthAdjust="spacingAndGlyphs" transform="rotate(180 754.0 324.0)">CLG225ABX2213</text>
<text x="778.0" y="348.0" fill="#363636" font-family="Liberation Sans" font-size="16.4" text-anchor="middle" textLength="84" lengthAdjust="spacingAndGlyphs" transform="rotate(180 778.0 342.0)">XC7Z010</text>
<text x="774.0" y="376.0" fill="#363636" font-family="Liberation Sans" font-size="30.1" text-anchor="middle" textLength="92" lengthAdjust="spacingAndGlyphs" transform="rotate(180 774.0 365.0)">ZYNQ</text>
<text x="770.0" y="398.0" fill="#363636" font-family="Liberation Sans" font-size="16.4" text-anchor="middle" textLength="60" lengthAdjust="spacingAndGlyphs" transform="rotate(180 770.0 392.0)">XILINX</text>
<circle cx="753" cy="392" r="5" fill="#363636"/>
<circle cx="855" cy="400" r="4" fill="#303030"/>
<rect x="578" y="417" width="300" height="17" fill="#030303"/>
<rect x="921" y="133" width="47" height="33" fill="#262626"/><rect x="921" y="166" width="47" height="10" fill="#050505"/>
<path d="M917 138 L917 130 L930 130" fill="none" stroke="#bdbdbd" stroke-width="3"/>
<rect x="895" y="141" width="8" height="8" fill="#444"/><rect x="896" y="144" width="6" height="3" fill="#999"/>
<rect x="905" y="141" width="8" height="8" fill="#444"/><rect x="906" y="144" width="6" height="3" fill="#999"/>
<rect x="895" y="155" width="8" height="8" fill="#444"/><rect x="896" y="158" width="6" height="3" fill="#999"/>
<rect x="905" y="155" width="8" height="8" fill="#444"/><rect x="906" y="158" width="6" height="3" fill="#999"/>
<path d="M882 166 L903 166 L893 175 Z" fill="#888"/>
<rect x="893" y="180" width="44" height="37" fill="#262626"/><rect x="893" y="217" width="44" height="6" fill="#050505"/>
<rect x="884" y="183" width="8" height="5" fill="#999"/><rect x="938" y="183" width="7" height="5" fill="#777"/>
<rect x="884" y="192" width="8" height="5" fill="#999"/><rect x="938" y="192" width="7" height="5" fill="#777"/>
<rect x="884" y="201" width="8" height="5" fill="#999"/><rect x="938" y="201" width="7" height="5" fill="#777"/>
<rect x="884" y="210" width="8" height="5" fill="#999"/><rect x="938" y="210" width="7" height="5" fill="#777"/>
<rect x="948" y="174" width="16" height="20" fill="#333"/><rect x="949" y="176" width="14" height="4" fill="#9a9a9a"/><rect x="948" y="206" width="16" height="20" fill="#333"/><rect x="949" y="208" width="14" height="4" fill="#9a9a9a"/>
<rect x="908" y="235" width="48" height="31" fill="#262626"/><rect x="908" y="266" width="48" height="12" fill="#050505"/>
<rect x="900" y="246" width="4.5" height="24" rx="2" fill="#9a9a9a"/><rect x="958.5" y="238" width="4.5" height="12" rx="2" fill="#8a8a8a"/>
<rect x="903" y="228" width="14" height="4" fill="#888"/><rect x="937" y="232" width="16" height="3" fill="#777"/>
<rect x="877" y="240" width="11" height="6" fill="#3a3a3a"/><rect x="878" y="241.5" width="9" height="3" fill="#b0b0b0"/>
<rect x="877" y="250" width="11" height="6" fill="#3a3a3a"/><rect x="878" y="251.5" width="9" height="3" fill="#b0b0b0"/>
<rect x="877" y="261" width="11" height="6" fill="#3a3a3a"/><rect x="878" y="262.5" width="9" height="3" fill="#b0b0b0"/>
<rect x="877" y="271" width="11" height="6" fill="#3a3a3a"/><rect x="878" y="272.5" width="9" height="3" fill="#b0b0b0"/>
<rect x="884.6" y="283" width="11" height="6" fill="#3a3a3a"/><rect x="885.6" y="284.5" width="9" height="3" fill="#b0b0b0"/>
<rect x="884.6" y="293" width="11" height="6" fill="#3a3a3a"/><rect x="885.6" y="294.5" width="9" height="3" fill="#b0b0b0"/>
<rect x="916" y="283" width="11" height="6" fill="#3a3a3a"/><rect x="917" y="284.5" width="9" height="3" fill="#b0b0b0"/>
<rect x="930" y="283" width="11" height="6" fill="#3a3a3a"/><rect x="931" y="284.5" width="9" height="3" fill="#b0b0b0"/>
<rect x="916" y="293" width="11" height="6" fill="#3a3a3a"/><rect x="917" y="294.5" width="9" height="3" fill="#b0b0b0"/>
<rect x="930" y="293" width="11" height="6" fill="#3a3a3a"/><rect x="931" y="294.5" width="9" height="3" fill="#b0b0b0"/>
<rect x="946" y="283" width="11" height="6" fill="#3a3a3a"/><rect x="947" y="284.5" width="9" height="3" fill="#b0b0b0"/>
<rect x="958" y="283" width="11" height="6" fill="#3a3a3a"/><rect x="959" y="284.5" width="9" height="3" fill="#b0b0b0"/>
<rect x="946" y="293" width="11" height="6" fill="#3a3a3a"/><rect x="947" y="294.5" width="9" height="3" fill="#b0b0b0"/>
<rect x="958" y="293" width="11" height="6" fill="#3a3a3a"/><rect x="959" y="294.5" width="9" height="3" fill="#b0b0b0"/>
<rect x="911" y="351" width="19.5" height="6.5" fill="#555"/><rect x="913" y="352.5" width="6" height="3.5" fill="#aaa"/><rect x="922" y="352.5" width="6" height="3.5" fill="#aaa"/>
<rect x="884" y="370" width="19.5" height="7" fill="#3a3a3a"/><rect x="886" y="371" width="15" height="4" fill="#a0a0a0"/>
<rect x="884" y="382" width="8" height="8.5" fill="#303030"/><rect x="884.5" y="383" width="7" height="4.5" fill="#9a9a9a"/>
<rect x="895" y="382" width="8" height="8.5" fill="#303030"/><rect x="895.5" y="383" width="7" height="4.5" fill="#9a9a9a"/>
<rect x="884" y="394" width="8" height="8.5" fill="#303030"/><rect x="884.5" y="395" width="7" height="4.5" fill="#9a9a9a"/>
<rect x="895" y="394" width="8" height="8.5" fill="#303030"/><rect x="895.5" y="395" width="7" height="4.5" fill="#9a9a9a"/>
<rect x="921.3" y="376.5" width="43.7" height="36.3" fill="#282828"/><rect x="921.3" y="412.8" width="43.7" height="8.6" fill="#040404"/>
<rect x="921" y="371.5" width="7.4" height="5" fill="#a8a8a8"/>
<rect x="932" y="371.5" width="7.4" height="5" fill="#a8a8a8"/>
<rect x="942.8" y="371.5" width="7.4" height="5" fill="#a8a8a8"/>
<rect x="953.9" y="371.5" width="7.4" height="5" fill="#a8a8a8"/>
<rect x="914.5" y="373" width="6.8" height="11.5" fill="#a0a0a0"/>
<rect x="914.5" y="387.6" width="6.8" height="4.9" fill="#a0a0a0"/>
<rect x="914.5" y="396.8" width="6.8" height="4.9" fill="#a0a0a0"/>
<rect x="914.5" y="405.4" width="6.8" height="9.9" fill="#a0a0a0"/>
<text x="941" y="328" fill="#c4c4c4" font-family="Liberation Sans" font-size="24">3C</text>
<rect x="938" y="333" width="16" height="2" fill="#bbb"/>
<text x="881" y="344" fill="#c8c8c8" stroke="#c8c8c8" stroke-width="0.7" font-family="Liberation Sans" font-size="26" textLength="55" lengthAdjust="spacingAndGlyphs">750</text>
<rect x="876.5" y="320.5" width="62" height="28" fill="none" stroke="#2e7d2e" stroke-width="1"/>
<rect x="886" y="310" width="7" height="13" fill="#0d5c1c"/><text x="887" y="321" fill="#e8f5e8" font-family="Liberation Mono" font-size="9.5">7</text>
<rect x="906.5" y="310" width="7" height="13" fill="#0d5c1c"/><text x="907.5" y="321" fill="#e8f5e8" font-family="Liberation Mono" font-size="9.5">5</text>
<rect x="926.5" y="310" width="7" height="13" fill="#0d5c1c"/><text x="927.5" y="321" fill="#e8f5e8" font-family="Liberation Mono" font-size="9.5">0</text>
<rect x="864" y="356" width="29.5" height="15.5" fill="#ffff00"/><text x="865" y="367.5" fill="#000" font-family="Liberation Mono" font-size="9" textLength="28" lengthAdjust="spacingAndGlyphs">rectA</text>
<rect x="578" y="434" width="390" height="64" fill="#181818"/>
<path d="M590 448 L590 488 Q590 494 597 494 L640 494" fill="none" stroke="#3c3c3c" stroke-width="4"/>
<circle cx="621" cy="465" r="17" fill="#161616" stroke="#303030" stroke-width="2"/><circle cx="621" cy="466" r="9" fill="#2a2a2a"/>
<rect x="617" y="428" width="8" height="7" fill="#777"/>
<g fill="#c4c4c4"><path d="M642.7 447.5 L667 447 L685.4 462 L660 462 Z"/><path d="M660 463.5 L685.4 463.5 L667 478.5 L642.7 478.5 Z"/><path d="M669.3 436 L673 433 L682 433 L687.2 440 L687.2 461 L685.4 461.5 L669.3 447 Z"/><path d="M685.4 464 L687.2 465 L687.2 483 L675 494 L669.3 494 L669.3 478.5 Z"/></g>
<path d="M693 433 L693 478 L705 489" fill="none" stroke="#bdbdbd" stroke-width="3.5"/>
<rect x="708" y="437" width="214" height="14" fill="#2a2a2a"/>
<rect x="714.0" y="438" width="4" height="9" fill="#7a7a7a"/><rect x="714.0" y="450" width="4" height="2" fill="#999"/>
<rect x="721.1" y="438" width="4" height="9" fill="#7a7a7a"/><rect x="721.1" y="450" width="4" height="2" fill="#999"/>
<rect x="728.2" y="438" width="4" height="9" fill="#7a7a7a"/><rect x="728.2" y="450" width="4" height="2" fill="#999"/>
<rect x="735.3" y="438" width="4" height="9" fill="#7a7a7a"/><rect x="735.3" y="450" width="4" height="2" fill="#999"/>
<rect x="742.4" y="438" width="4" height="9" fill="#7a7a7a"/><rect x="742.4" y="450" width="4" height="2" fill="#999"/>
<rect x="749.5" y="438" width="4" height="9" fill="#7a7a7a"/><rect x="749.5" y="450" width="4" height="2" fill="#999"/>
<rect x="756.6" y="438" width="4" height="9" fill="#7a7a7a"/><rect x="756.6" y="450" width="4" height="2" fill="#999"/>
<rect x="763.7" y="438" width="4" height="9" fill="#7a7a7a"/><rect x="763.7" y="450" width="4" height="2" fill="#999"/>
<rect x="770.8" y="438" width="4" height="9" fill="#7a7a7a"/><rect x="770.8" y="450" width="4" height="2" fill="#999"/>
<rect x="777.9" y="438" width="4" height="9" fill="#7a7a7a"/><rect x="777.9" y="450" width="4" height="2" fill="#999"/>
<rect x="785.0" y="438" width="4" height="9" fill="#7a7a7a"/><rect x="785.0" y="450" width="4" height="2" fill="#999"/>
<rect x="792.1" y="438" width="4" height="9" fill="#7a7a7a"/><rect x="792.1" y="450" width="4" height="2" fill="#999"/>
<rect x="799.2" y="438" width="4" height="9" fill="#7a7a7a"/><rect x="799.2" y="450" width="4" height="2" fill="#999"/>
<rect x="806.3" y="438" width="4" height="9" fill="#7a7a7a"/><rect x="806.3" y="450" width="4" height="2" fill="#999"/>
<rect x="813.4" y="438" width="4" height="9" fill="#7a7a7a"/><rect x="813.4" y="450" width="4" height="2" fill="#999"/>
<rect x="820.5" y="438" width="4" height="9" fill="#7a7a7a"/><rect x="820.5" y="450" width="4" height="2" fill="#999"/>
<rect x="827.6" y="438" width="4" height="9" fill="#7a7a7a"/><rect x="827.6" y="450" width="4" height="2" fill="#999"/>
<rect x="834.7" y="438" width="4" height="9" fill="#7a7a7a"/><rect x="834.7" y="450" width="4" height="2" fill="#999"/>
<rect x="841.8" y="438" width="4" height="9" fill="#7a7a7a"/><rect x="841.8" y="450" width="4" height="2" fill="#999"/>
<rect x="848.9" y="438" width="4" height="9" fill="#7a7a7a"/><rect x="848.9" y="450" width="4" height="2" fill="#999"/>
<rect x="856.0" y="438" width="4" height="9" fill="#7a7a7a"/><rect x="856.0" y="450" width="4" height="2" fill="#999"/>
<rect x="863.1" y="438" width="4" height="9" fill="#7a7a7a"/><rect x="863.1" y="450" width="4" height="2" fill="#999"/>
<rect x="870.2" y="438" width="4" height="9" fill="#7a7a7a"/><rect x="870.2" y="450" width="4" height="2" fill="#999"/>
<rect x="877.3" y="438" width="4" height="9" fill="#7a7a7a"/><rect x="877.3" y="450" width="4" height="2" fill="#999"/>
<rect x="884.4" y="438" width="4" height="9" fill="#7a7a7a"/><rect x="884.4" y="450" width="4" height="2" fill="#999"/>
<rect x="891.5" y="438" width="4" height="9" fill="#7a7a7a"/><rect x="891.5" y="450" width="4" height="2" fill="#999"/>
<rect x="898.6" y="438" width="4" height="9" fill="#7a7a7a"/><rect x="898.6" y="450" width="4" height="2" fill="#999"/>
<rect x="905.7" y="438" width="4" height="9" fill="#7a7a7a"/><rect x="905.7" y="450" width="4" height="2" fill="#999"/>
<rect x="912.8" y="438" width="4" height="9" fill="#7a7a7a"/><rect x="912.8" y="450" width="4" height="2" fill="#999"/>
<rect x="919.9" y="438" width="4" height="9" fill="#7a7a7a"/><rect x="919.9" y="450" width="4" height="2" fill="#999"/>
<rect x="706" y="454" width="220" height="40" fill="#101010" stroke="#555" stroke-width="2"/><rect x="718" y="462" width="196" height="14" fill="#2e2e2e"/><rect x="740" y="460" width="40" height="4" fill="#111"/><rect x="850" y="460" width="40" height="4" fill="#111"/><rect x="708" y="478" width="216" height="3" fill="#8a8a8a"/>
<path d="M930 432 L930 475 Q930 488 920 488 L912 488" fill="none" stroke="#bdbdbd" stroke-width="3"/>
<rect x="940" y="430" width="28" height="14" fill="#3a3a3a"/><rect x="944" y="432" width="20" height="10" fill="#666"/>
<rect x="938" y="452" width="12" height="18" fill="#444"/><rect x="939" y="455" width="10" height="3" fill="#aaa"/>
</g></svg>
<div class="a" style="left:1000px;top:121px;width:1px;height:149px;background:#d0d0d0"></div>
<div class="a" style="left:1001px;top:130px;width:8px;height:1px;background:#d0d0d0"></div>
<div class="a" style="left:1017px;top:154px;width:1px;height:104px;background:#d0d0d0"></div>
<div class="a" style="left:1018px;top:162px;width:8px;height:1px;background:#d0d0d0"></div>
<div class="a" style="left:1018px;top:178px;width:8px;height:1px;background:#d0d0d0"></div>
<div class="a" style="left:1018px;top:194px;width:8px;height:1px;background:#d0d0d0"></div>
<div class="a" style="left:1018px;top:210px;width:8px;height:1px;background:#d0d0d0"></div>
<div class="a" style="left:1018px;top:226px;width:8px;height:1px;background:#d0d0d0"></div>
<div class="a" style="left:1018px;top:242px;width:8px;height:1px;background:#d0d0d0"></div>
<div class="a" style="left:1018px;top:258px;width:8px;height:1px;background:#d0d0d0"></div>
<div class="a" style="left:1009px;top:122px;width:271px;height:15px;background:#d9d9d9"></div>
<div class="t" style="left:1013.5px;top:110.24px;font-size:9.4px;line-height:9.4px;transform:scaleX(1.0001);color:#111">main</div>
<svg style="left:996px;top:109px" width="11" height="11"><rect x="0.5" y="0.5" width="10" height="10" fill="#eef4fc" stroke="#5b8fd0"/><path d="M3 3L3 8M3 5L6 5M3 8L6 8" stroke="#2a5aa0" fill="none"/><rect x="6" y="4" width="3" height="2" fill="#2a5aa0"/><rect x="6" y="7" width="3" height="2" fill="#2a5aa0"/></svg>
<div class="t" style="left:1029.6px;top:126.24px;font-size:9.4px;line-height:9.4px;transform:scaleX(1.0001);color:#111">PCB - 3D Scan with Reflectance 8-bit Image - OCR</div>
<div class="a" style="left:1015px;top:127px;width:6px;height:6px;border-radius:50%;background:#3d8fe0"></div>
<div class="t" style="left:1029px;top:142.24px;font-size:9.4px;line-height:9.4px;transform:scaleX(1.0001);color:#111">acquire3dA</div>
<svg style="left:1011px;top:141px" width="13" height="10"><ellipse cx="6.5" cy="5" rx="6" ry="4.6" fill="#123e6e"/><ellipse cx="6.5" cy="4.6" rx="2.6" ry="1.6" fill="#e8eef6"/></svg>
<div class="t" style="left:1045.4px;top:158.24px;font-size:9.4px;line-height:9.4px;transform:scaleX(1.0001);color:#111">image_source &lt;- fileB.handle</div>
<div class="t" style="left:1028.8px;top:157.7px;font-size:9px;line-height:9px;font-weight:bold;color:#2438b0;transform:scaleX(0.74)">Hdl</div>
<svg style="left:1027.5px;top:153.5px" width="6" height="5"><path d="M0.5 4.5L5.5 0.5L5.5 4.5Z" fill="#d01010"/></svg>
<div class="t" style="left:1045.4px;top:174.24px;font-size:9.4px;line-height:9.4px;transform:scaleX(1.0001);color:#111">data3d</div>
<div class="t" style="left:1028.8px;top:173.7px;font-size:9px;line-height:9px;font-weight:bold;color:#2438b0;transform:scaleX(0.74)">Hdl</div>
<svg style="left:1036px;top:171px" width="5" height="5"><path d="M0 0L5 0L5 5Z" fill="#108a20"/></svg>
<div class="t" style="left:1045.4px;top:190.24px;font-size:9.4px;line-height:9.4px;transform:scaleX(1.0001);color:#111">image_r</div>
<div class="t" style="left:1028.8px;top:189.7px;font-size:9px;line-height:9px;font-weight:bold;color:#2438b0;transform:scaleX(0.74)">Hdl</div>
<svg style="left:1036px;top:187px" width="5" height="5"><path d="M0 0L5 0L5 5Z" fill="#108a20"/></svg>
<div class="t" style="left:1045.4px;top:206.24px;font-size:9.4px;line-height:9.4px;transform:scaleX(1.0001);color:#111">image_w</div>
<div class="t" style="left:1028.8px;top:205.7px;font-size:9px;line-height:9px;font-weight:bold;color:#2438b0;transform:scaleX(0.74)">Hdl</div>
<svg style="left:1036px;top:203px" width="5" height="5"><path d="M0 0L5 0L5 5Z" fill="#108a20"/></svg>
<div class="t" style="left:1045.4px;top:222.24px;font-size:9.4px;line-height:9.4px;transform:scaleX(1.0001);color:#111">acquired_lines</div>
<div class="t" style="left:1030px;top:221.7px;font-size:9px;line-height:9px;font-weight:bold;color:#2438b0;transform:scaleX(0.85)">N</div>
<svg style="left:1037px;top:219px" width="5" height="5"><path d="M0 0L5 0L5 5Z" fill="#108a20"/></svg>
<div class="t" style="left:1045.4px;top:238.24px;font-size:9.4px;line-height:9.4px;transform:scaleX(1.0001);color:#111">fragment_count</div>
<div class="t" style="left:1030px;top:237.7px;font-size:9px;line-height:9px;font-weight:bold;color:#2438b0;transform:scaleX(0.85)">N</div>
<svg style="left:1037px;top:235px" width="5" height="5"><path d="M0 0L5 0L5 5Z" fill="#108a20"/></svg>
<div class="t" style="left:1045.4px;top:254.24px;font-size:9.4px;line-height:9.4px;transform:scaleX(1.0001);color:#111">status</div>
<div class="t" style="left:1030px;top:253.7px;font-size:9px;line-height:9px;font-weight:bold;color:#2438b0;transform:scaleX(0.85)">B</div>
<svg style="left:1037px;top:251px" width="5" height="5"><path d="M0 0L5 0L5 5Z" fill="#108a20"/></svg>
<div class="t" style="left:1029px;top:270.24px;font-size:9.4px;line-height:9.4px;transform:scaleX(1.0001);color:#111">workspace_surfaceA</div>
<svg style="left:1012px;top:268.5px" width="12" height="11"><rect x="0.5" y="0.5" width="11" height="10" rx="1.5" fill="#eaf6fe" stroke="#4f92d0"/><rect x="1" y="1" width="10" height="1.8" fill="#62aee8"/><text x="1.8" y="9" font-family="Liberation Sans" font-weight="bold" font-size="6.5" fill="#111a33" textLength="8.4" lengthAdjust="spacingAndGlyphs">3D</text></svg>
<div class="t" style="left:1029px;top:286.24px;font-size:9.4px;line-height:9.4px;transform:scaleX(1.0001);color:#111">surface_untiltA</div>
<svg style="left:1014px;top:286px" width="9" height="8"><path d="M1 1L4.5 4L1 7M4 1L7.5 4L4 7" fill="none" stroke="#9a9a9a" stroke-width="1.2"/></svg>
<div class="t" style="left:1029px;top:302.24px;font-size:9.4px;line-height:9.4px;transform:scaleX(1.0001);color:#111">workspace_surfaceB</div>
<svg style="left:1012px;top:300.5px" width="12" height="11"><rect x="0.5" y="0.5" width="11" height="10" rx="1.5" fill="#eaf6fe" stroke="#4f92d0"/><rect x="1" y="1" width="10" height="1.8" fill="#62aee8"/><text x="1.8" y="9" font-family="Liberation Sans" font-weight="bold" font-size="6.5" fill="#111a33" textLength="8.4" lengthAdjust="spacingAndGlyphs">3D</text></svg>
<div class="t" style="left:1029px;top:318.24px;font-size:9.4px;line-height:9.4px;transform:scaleX(1.0001);color:#111">convert_16_to_8A</div>
<svg style="left:1014px;top:318px" width="9" height="8"><path d="M1 1L4.5 4L1 7M4 1L7.5 4L4 7" fill="none" stroke="#9a9a9a" stroke-width="1.2"/></svg>
<div class="t" style="left:1029px;top:334.24px;font-size:9.4px;line-height:9.4px;transform:scaleX(1.0001);color:#111">workspace_mono8A</div>
<div class="a" style="left:1012px;top:333px;width:11px;height:10px;border:1px solid #4a90d9;background:#eaf3fc;border-radius:1px;font-size:6px;line-height:8px;text-align:center;color:#333">8</div>
<div class="a" style="left:997px;top:142px;width:8px;height:8px;background:#fff;border:1px solid #bdbdbd"></div>
<div class="a" style="left:999px;top:146px;width:4px;height:1px;background:#8a8a8a"></div>
<div class="a" style="left:997px;top:270px;width:8px;height:8px;background:#fff;border:1px solid #bdbdbd"></div>
<div class="a" style="left:999px;top:274px;width:4px;height:1px;background:#8a8a8a"></div>
<div class="a" style="left:1001px;top:272px;width:1px;height:5px;background:#8a8a8a"></div>
<div class="a" style="left:997px;top:286px;width:8px;height:8px;background:#fff;border:1px solid #bdbdbd"></div>
<div class="a" style="left:999px;top:290px;width:4px;height:1px;background:#8a8a8a"></div>
<div class="a" style="left:1001px;top:288px;width:1px;height:5px;background:#8a8a8a"></div>
<div class="a" style="left:997px;top:302px;width:8px;height:8px;background:#fff;border:1px solid #bdbdbd"></div>
<div class="a" style="left:999px;top:306px;width:4px;height:1px;background:#8a8a8a"></div>
<div class="a" style="left:1001px;top:304px;width:1px;height:5px;background:#8a8a8a"></div>
<div class="a" style="left:997px;top:318px;width:8px;height:8px;background:#fff;border:1px solid #bdbdbd"></div>
<div class="a" style="left:999px;top:322px;width:4px;height:1px;background:#8a8a8a"></div>
<div class="a" style="left:1001px;top:320px;width:1px;height:5px;background:#8a8a8a"></div>
<div class="a" style="left:997px;top:334px;width:8px;height:8px;background:#fff;border:1px solid #bdbdbd"></div>
<div class="a" style="left:999px;top:338px;width:4px;height:1px;background:#8a8a8a"></div>
<div class="a" style="left:1001px;top:336px;width:1px;height:5px;background:#8a8a8a"></div>
<div class="a" style="left:3px;top:42px;width:2px;height:1px;background:#b8b8b8"></div>
<div class="a" style="left:3px;top:45px;width:2px;height:1px;background:#b8b8b8"></div>
<div class="a" style="left:3px;top:48px;width:2px;height:1px;background:#b8b8b8"></div>
<div class="a" style="left:3px;top:51px;width:2px;height:1px;background:#b8b8b8"></div>
<div class="a" style="left:3px;top:54px;width:2px;height:1px;background:#b8b8b8"></div>
<svg style="left:13.5px;top:41.5px" width="12" height="12" viewBox="0 0 12 12"><defs><linearGradient id="g1" x1="0" y1="0" x2="1" y2="1"><stop offset="0" stop-color="#ffffff"/><stop offset="1" stop-color="#d8d8f4"/></linearGradient></defs><rect x="0.75" y="0.75" width="10.5" height="10.5" rx="1" fill="url(#g1)" stroke="#5aa0e0" stroke-width="1.5"/><rect x="1" y="1" width="10" height="2.2" fill="#5aa0e0"/></svg>
<svg style="left:33.5px;top:41.5px" width="12" height="12" viewBox="0 0 12 12"><path d="M1 3L5 2L6 3.5L11 2.5L11.5 10L2 11.5Z" fill="#e8d040" stroke="#b89a20" stroke-width="0.8"/><path d="M3 5L11 4L10.5 10.5L2 11.5Z" fill="#f4e070"/><circle cx="3.5" cy="3.5" r="3" fill="#3aa03a"/><circle cx="3" cy="3" r="1.3" fill="#8ae08a"/></svg>
<svg style="left:53.8px;top:41.5px" width="12" height="12" viewBox="0 0 12 12"><rect x="0.5" y="0.5" width="11" height="11" rx="1" fill="#2f66b8"/><rect x="2.5" y="1" width="7" height="4.5" fill="#e8e8e8"/><rect x="3" y="8" width="6" height="3.5" fill="#8fb2e0"/></svg>
<svg style="left:73.6px;top:41.5px" width="12" height="12" viewBox="0 0 12 12"><rect x="0.5" y="0.5" width="11" height="11" rx="1" fill="#2f66b8"/><rect x="2.5" y="1" width="7" height="4.5" fill="#e8e8e8"/><rect x="3" y="8" width="6" height="3.5" fill="#8fb2e0"/><rect x="6.0" y="7.0" width="6.0" height="5.0" fill="#5aa0e0"/><rect x="7.0" y="8.5" width="4.0" height="2.0" fill="#fff"/></svg>
<div class="a" style="left:92px;top:42px;width:1px;height:12px;background:#d6d6d6"></div>
<svg style="left:99.5px;top:41.5px" width="11" height="12" viewBox="0 0 11 12"><defs><linearGradient id="g2" x1="0" y1="0" x2="0" y2="1"><stop offset="0" stop-color="#8ee080"/><stop offset="1" stop-color="#2e9a2e"/></linearGradient></defs><path d="M1.5 1L10.5 6L1.5 11Z" fill="url(#g2)" stroke="#3a8a3a" stroke-width="1" stroke-linejoin="round"/><text x="3" y="9" font-size="6.5" font-family="Liberation Sans" font-weight="bold" fill="#f4fff0">1</text></svg>
<svg style="left:119.4px;top:41.5px" width="11" height="12" viewBox="0 0 11 12"><defs><linearGradient id="g3" x1="0" y1="0" x2="0" y2="1"><stop offset="0" stop-color="#8ee080"/><stop offset="1" stop-color="#2e9a2e"/></linearGradient></defs><path d="M1.5 1L10.5 6L1.5 11Z" fill="url(#g3)" stroke="#3a8a3a" stroke-width="1" stroke-linejoin="round"/></svg>
<div class="a" style="left:137px;top:42px;width:1px;height:12px;background:#d6d6d6"></div>
<svg style="left:145px;top:42px" width="11" height="11" viewBox="0 0 11 11"><defs><linearGradient id="g4" x1="0" y1="0" x2="1" y2="1"><stop offset="0" stop-color="#d8d8d8"/><stop offset="1" stop-color="#9a9a9a"/></linearGradient></defs><rect x="0.5" y="0.5" width="10" height="10" rx="1" fill="url(#g4)" stroke="#a0a0a0"/></svg>
<svg style="left:165px;top:41.5px" width="12" height="12" viewBox="0 0 12 12"><path d="M0.5 0.5L5 2L4 3.5L11 9L10 11.5L9 11L3 5.5L2 6.5Z" fill="#bdbdbd" stroke="#a8a8a8" stroke-width="0.6"/></svg>
<div class="a" style="left:183px;top:42px;width:1px;height:12px;background:#d6d6d6"></div>
<svg style="left:191.4px;top:41.5px" width="10" height="12" viewBox="0 0 10 12"><rect x="0.5" y="0.5" width="3.6" height="11" rx="1" fill="#1d6fd6" stroke="#0d4fb0" stroke-width="0.6"/><rect x="5.9" y="0.5" width="3.6" height="11" rx="1" fill="#1d6fd6" stroke="#0d4fb0" stroke-width="0.6"/></svg>
<svg style="left:210.7px;top:41.5px" width="11" height="12" viewBox="0 0 11 12"><path d="M0.5 0.5L6 6L0.5 11.5Z" fill="#1d6fd6"/><rect x="7" y="0.5" width="3.6" height="11" rx="1" fill="#1d6fd6" stroke="#0d4fb0" stroke-width="0.6"/></svg>
<div class="a" style="left:229px;top:42px;width:1px;height:12px;background:#d6d6d6"></div>
<svg style="left:237.7px;top:41.5px" width="9" height="12" viewBox="0 0 9 12"><defs><radialGradient id="g5" cx="0.4" cy="0.35" r="0.6"><stop offset="0" stop-color="#fff8a0"/><stop offset="1" stop-color="#e8c400"/></radialGradient></defs><circle cx="4.5" cy="4.5" r="4.2" fill="url(#g5)"/><rect x="3" y="8" width="3" height="2.5" fill="#d8b800"/><rect x="3.2" y="10.5" width="2.6" height="1.5" fill="#777"/></svg>
<svg style="left:10.8px;top:91.5px" width="12" height="12" viewBox="0 0 12 12"><defs><radialGradient id="g6" cx="0.4" cy="0.35" r="0.7"><stop offset="0" stop-color="#ffffff"/><stop offset="1" stop-color="#9cc8e8"/></radialGradient></defs><line x1="7" y1="7" x2="11" y2="11" stroke="#e0a060" stroke-width="2.2" stroke-linecap="round"/><circle cx="4.5" cy="4.3" r="3.8" fill="url(#g6)" stroke="#8aa8c0" stroke-width="0.8"/><rect x="2.5" y="3.6" width="4" height="1.3" fill="#a02020"/></svg>
<svg style="left:30.8px;top:91.5px" width="12" height="12" viewBox="0 0 12 12"><defs><radialGradient id="g7" cx="0.4" cy="0.35" r="0.7"><stop offset="0" stop-color="#ffffff"/><stop offset="1" stop-color="#9cc8e8"/></radialGradient></defs><line x1="7" y1="7" x2="11" y2="11" stroke="#e0a060" stroke-width="2.2" stroke-linecap="round"/><circle cx="4.5" cy="4.3" r="3.8" fill="url(#g7)" stroke="#8aa8c0" stroke-width="0.8"/><text x="3" y="6.6" font-size="5.5" font-family="Liberation Sans" font-weight="bold" fill="#103070">1</text></svg>
<svg style="left:50.9px;top:91.5px" width="12" height="12" viewBox="0 0 12 12"><defs><radialGradient id="g8" cx="0.4" cy="0.35" r="0.7"><stop offset="0" stop-color="#ffffff"/><stop offset="1" stop-color="#9cc8e8"/></radialGradient></defs><line x1="7" y1="7" x2="11" y2="11" stroke="#e0a060" stroke-width="2.2" stroke-linecap="round"/><circle cx="4.5" cy="4.3" r="3.8" fill="url(#g8)" stroke="#8aa8c0" stroke-width="0.8"/><rect x="2.3" y="3.7" width="4.4" height="1.3" fill="#20a020"/><rect x="3.85" y="2.2" width="1.3" height="4.3" fill="#20a020"/></svg>
<svg style="left:70.9px;top:92.2px" width="14" height="13" viewBox="0 0 14 13"><rect x="0.5" y="0.5" width="11" height="10" fill="#d8dce0" stroke="#50585e" stroke-width="1"/><path d="M2 2h2v2h-2zM6 2h1v3h-1zM8 2h2v2h-2zM2 6h1v3h-1zM4 5h2v2h-2zM8 6h2v3h-2z" fill="#3a3f44"/><path d="M9 11.5L13.5 11.5L11.25 13.5Z" fill="#333"/></svg>
<div class="a" style="left:90px;top:92px;width:1px;height:12px;background:#d6d6d6"></div>
<svg style="left:96.8px;top:92px" width="11.5" height="11.5" viewBox="0 0 11.5 11.5"><defs><radialGradient id="g9" cx="0.4" cy="0.35" r="0.65"><stop offset="0" stop-color="#80f080"/><stop offset="0.6" stop-color="#10b010"/><stop offset="1" stop-color="#0a8a0a"/></radialGradient></defs><circle cx="5.75" cy="5.75" r="5.45" fill="url(#g9)"/></svg>
<div class="a" style="left:113px;top:88.7px;width:18.6px;height:18px;background:#dedede;border:1px solid #bcbcbc;border-radius:2px"></div>
<svg style="left:116.8px;top:92px" width="11.5" height="11.5" viewBox="0 0 11.5 11.5"><defs><radialGradient id="g10" cx="0.4" cy="0.35" r="0.65"><stop offset="0" stop-color="#ffa080"/><stop offset="0.6" stop-color="#e04020"/><stop offset="1" stop-color="#b03010"/></radialGradient></defs><circle cx="5.75" cy="5.75" r="5.45" fill="url(#g10)"/></svg>
<div class="a" style="left:136px;top:92px;width:1px;height:12px;background:#d6d6d6"></div>
<svg style="left:142.4px;top:92px" width="12" height="11" viewBox="0 0 12 11"><defs><linearGradient id="g11" x1="0" y1="0" x2="1" y2="1"><stop offset="0" stop-color="#1010c0"/><stop offset="0.5" stop-color="#208060"/><stop offset="1" stop-color="#40a020"/></linearGradient></defs><rect x="1" y="1" width="10" height="9" fill="url(#g11)" stroke="#111" stroke-width="0.8"/><circle cx="1" cy="1" r="1" fill="#e05050"/><circle cx="6" cy="1" r="1" fill="#e05050"/><circle cx="11" cy="1" r="1" fill="#e05050"/><circle cx="1" cy="10" r="1" fill="#e05050"/><circle cx="6" cy="10" r="1" fill="#e05050"/><circle cx="11" cy="10" r="1" fill="#e05050"/><circle cx="1" cy="5.5" r="1" fill="#e05050"/><circle cx="11" cy="5.5" r="1" fill="#e05050"/></svg>
<svg style="left:162px;top:92px" width="13" height="11" viewBox="0 0 13 11"><defs><linearGradient id="g12" x1="0" y1="0" x2="1" y2="1"><stop offset="0" stop-color="#1010c0"/><stop offset="0.5" stop-color="#208060"/><stop offset="1" stop-color="#40a020"/></linearGradient></defs><rect x="0.7" y="0.7" width="6" height="5" fill="url(#g12)" stroke="#111" stroke-width="0.6"/><rect x="6" y="5.5" width="6" height="5" fill="url(#g12)" stroke="#111" stroke-width="0.6"/><circle cx="0.7" cy="0.7" r="0.9" fill="#e05050"/><circle cx="6.7" cy="0.7" r="0.9" fill="#e05050"/><circle cx="0.7" cy="5.7" r="0.9" fill="#e05050"/><circle cx="6" cy="10.5" r="0.9" fill="#e05050"/><circle cx="12" cy="10.5" r="0.9" fill="#e05050"/><circle cx="12" cy="5.5" r="0.9" fill="#e05050"/></svg>
<svg style="left:182px;top:92px" width="12" height="11" viewBox="0 0 12 11"><defs><linearGradient id="g13" x1="0" y1="0" x2="1" y2="1"><stop offset="0" stop-color="#1010c0"/><stop offset="0.5" stop-color="#208060"/><stop offset="1" stop-color="#40a020"/></linearGradient></defs><rect x="1" y="1" width="10" height="9" fill="url(#g13)" stroke="#111" stroke-width="0.8"/><rect x="3.5" y="3.5" width="5" height="4" fill="#fff" stroke="#111" stroke-width="0.6"/><circle cx="1" cy="1" r="1" fill="#e05050"/><circle cx="6" cy="1" r="1" fill="#e05050"/><circle cx="11" cy="1" r="1" fill="#e05050"/><circle cx="1" cy="10" r="1" fill="#e05050"/><circle cx="6" cy="10" r="1" fill="#e05050"/><circle cx="11" cy="10" r="1" fill="#e05050"/><circle cx="1" cy="5.5" r="1" fill="#e05050"/><circle cx="11" cy="5.5" r="1" fill="#e05050"/></svg>
<svg style="left:203.6px;top:92.5px" width="10" height="10" viewBox="0 0 10 10"><line x1="1" y1="1" x2="9" y2="9" stroke="#111" stroke-width="1.2"/><circle cx="1" cy="1" r="1" fill="#e05050"/><circle cx="9" cy="9" r="1" fill="#e05050"/></svg>
<svg style="left:222px;top:92px" width="12" height="11" viewBox="0 0 12 11"><defs><linearGradient id="g16" x1="0" y1="0" x2="1" y2="0"><stop offset="0" stop-color="#3a7a30"/><stop offset="0.6" stop-color="#508a20"/><stop offset="1" stop-color="#d0a020"/></linearGradient></defs><ellipse cx="6" cy="5.5" rx="5.5" ry="5" fill="url(#g16)" stroke="#a04040" stroke-width="0.6"/><circle cx="6" cy="0.5" r="0.9" fill="#e05050"/><circle cx="0.5" cy="5.5" r="0.9" fill="#e05050"/><circle cx="11.5" cy="5.5" r="0.9" fill="#e05050"/><circle cx="6" cy="10.5" r="0.9" fill="#e05050"/></svg>
<svg style="left:242px;top:91.5px" width="13" height="12" viewBox="0 0 13 12"><circle cx="9" cy="3.5" r="3.2" fill="#3a7a30" stroke="#a04040" stroke-width="0.7"/><circle cx="3.6" cy="8.3" r="3.2" fill="#3a7a30" stroke="#a04040" stroke-width="0.7"/></svg>
<svg style="left:262px;top:92px" width="12" height="11" viewBox="0 0 12 11"><ellipse cx="6" cy="5.5" rx="5.3" ry="4.8" fill="#3a7a30" stroke="#a04040" stroke-width="0.8"/><ellipse cx="6" cy="5.5" rx="2.4" ry="2" fill="#fff"/></svg>
<svg style="left:280.8px;top:91.5px" width="15" height="12" viewBox="0 0 15 12"><path d="M3 0.5L10 0.5L13 3.5L13 11.5L3 11.5Z" fill="#fafafa" stroke="#909090" stroke-width="0.8"/><path d="M1 10L7 4" stroke="#3a78c8" stroke-width="2" stroke-linecap="round"/><circle cx="8" cy="3.5" r="2" fill="none" stroke="#7a8a9a" stroke-width="1.2"/><path d="M11 11L14.5 11L12.75 12.5Z" fill="#222"/></svg>
<div class="a" style="left:301px;top:92px;width:1px;height:12px;background:#d6d6d6"></div>
<svg style="left:306.7px;top:91px" width="14" height="12" viewBox="0 0 14 12"><defs><radialGradient id="g19" cx="0.45" cy="0.4" r="0.6"><stop offset="0" stop-color="#8090e0"/><stop offset="1" stop-color="#3040a0"/></radialGradient></defs><circle cx="6" cy="5.8" r="5" fill="url(#g19)" stroke="#25303a" stroke-width="1.8"/><path d="M9.5 9.5L11 11" stroke="#25303a" stroke-width="2"/><path d="M10.5 11L14 11L12.25 12.5Z" fill="#222"/></svg>
<svg style="left:328.8px;top:91.5px" width="12" height="12" viewBox="0 0 12 12"><rect x="0.5" y="0.5" width="10" height="11" fill="#f4f6fa" stroke="#8898b0" stroke-width="0.8"/><path d="M4 5L7 5L7 3L10.5 6L7 9L7 7L4 7Z" fill="#30c030" stroke="#208020" stroke-width="0.5"/></svg>
<svg style="left:347.8px;top:91.5px" width="12" height="12" viewBox="0 0 12 12"><rect x="0.5" y="0.5" width="10" height="11" fill="#f4f6fa" stroke="#8898b0" stroke-width="0.8"/><path d="M6 1L9 4L7.3 4L7.3 6L4.7 6L4.7 4L3 4Z" fill="#30c030"/><path d="M5 11L2 8L3.7 8L3.7 6L6.3 6L6.3 8L8 8Z" fill="#30c030"/></svg>
<div class="a" style="left:367px;top:92px;width:1px;height:12px;background:#d6d6d6"></div>
<svg style="left:373.7px;top:91.5px" width="12" height="12" viewBox="0 0 12 12"><rect x="0.5" y="0.5" width="11" height="11" rx="1" fill="#2f66b8"/><rect x="2.5" y="1" width="7" height="4.5" fill="#e8e8e8"/><rect x="3" y="8" width="6" height="3.5" fill="#8fb2e0"/></svg>
<svg style="left:567px;top:88px" width="12" height="12" viewBox="0 0 12 12"><defs><radialGradient id="g20" cx="0.4" cy="0.35" r="0.7"><stop offset="0" stop-color="#ffffff"/><stop offset="1" stop-color="#9cc8e8"/></radialGradient></defs><line x1="7" y1="7" x2="11" y2="11" stroke="#e0a060" stroke-width="2.2" stroke-linecap="round"/><circle cx="4.5" cy="4.3" r="3.8" fill="url(#g20)" stroke="#8aa8c0" stroke-width="0.8"/><rect x="2.5" y="3.6" width="4" height="1.3" fill="#a02020"/></svg>
<svg style="left:587px;top:88px" width="12" height="12" viewBox="0 0 12 12"><defs><radialGradient id="g21" cx="0.4" cy="0.35" r="0.7"><stop offset="0" stop-color="#ffffff"/><stop offset="1" stop-color="#9cc8e8"/></radialGradient></defs><line x1="7" y1="7" x2="11" y2="11" stroke="#e0a060" stroke-width="2.2" stroke-linecap="round"/><circle cx="4.5" cy="4.3" r="3.8" fill="url(#g21)" stroke="#8aa8c0" stroke-width="0.8"/><text x="3" y="6.6" font-size="5.5" font-family="Liberation Sans" font-weight="bold" fill="#103070">1</text></svg>
<svg style="left:607px;top:88px" width="12" height="12" viewBox="0 0 12 12"><defs><radialGradient id="g22" cx="0.4" cy="0.35" r="0.7"><stop offset="0" stop-color="#ffffff"/><stop offset="1" stop-color="#9cc8e8"/></radialGradient></defs><line x1="7" y1="7" x2="11" y2="11" stroke="#e0a060" stroke-width="2.2" stroke-linecap="round"/><circle cx="4.5" cy="4.3" r="3.8" fill="url(#g22)" stroke="#8aa8c0" stroke-width="0.8"/><rect x="2.3" y="3.7" width="4.4" height="1.3" fill="#20a020"/><rect x="3.85" y="2.2" width="1.3" height="4.3" fill="#20a020"/></svg>
<svg style="left:627px;top:88px" width="11" height="12" viewBox="0 0 11 12"><path d="M2 6L2 3Q2 2 3 2Q4 2 4 3L4 1.5Q4 0.5 5 0.5Q6 0.5 6 1.5L6 1.8Q6 1 7 1Q8 1 8 2L8 3Q8 2.3 9 2.3Q10 2.5 10 3.5L10 8Q10 11.5 6.5 11.5L5 11.5Q3 11.5 1.5 9L0.5 7Q0.5 6 1.5 6Z" fill="#e8b878" stroke="#b08040" stroke-width="0.6"/></svg>
<svg style="left:646.7px;top:88.4px" width="15" height="13" viewBox="0 0 15 13"><rect x="0.5" y="0.5" width="12" height="10" fill="#d8dce0" stroke="#50585e" stroke-width="1"/><path d="M2 2h2v2h-2zM6 2h1v3h-1zM8 2h2v2h-2zM2 6h1v3h-1zM4 5h2v2h-2zM8 6h2v3h-2z" fill="#3a3f44"/><path d="M10 11.5L14.5 11.5L12.25 13.5Z" fill="#333"/></svg>
<div class="a" style="left:666px;top:88px;width:1px;height:12px;background:#d6d6d6"></div>
<svg style="left:672.5px;top:88px" width="11.5" height="11.5" viewBox="0 0 11.5 11.5"><defs><radialGradient id="g23" cx="0.4" cy="0.35" r="0.65"><stop offset="0" stop-color="#80f080"/><stop offset="0.6" stop-color="#10b010"/><stop offset="1" stop-color="#0a8a0a"/></radialGradient></defs><circle cx="5.75" cy="5.75" r="5.45" fill="url(#g23)"/></svg>
<div class="a" style="left:689px;top:85px;width:18.7px;height:17.5px;background:#dedede;border:1px solid #bcbcbc;border-radius:2px"></div>
<svg style="left:692.5px;top:88px" width="11.5" height="11.5" viewBox="0 0 11.5 11.5"><defs><radialGradient id="g24" cx="0.4" cy="0.35" r="0.65"><stop offset="0" stop-color="#ffa080"/><stop offset="0.6" stop-color="#e04020"/><stop offset="1" stop-color="#b03010"/></radialGradient></defs><circle cx="5.75" cy="5.75" r="5.45" fill="url(#g24)"/></svg>
<div class="a" style="left:711px;top:88px;width:1px;height:12px;background:#d6d6d6"></div>
<svg style="left:718.5px;top:89.3px" width="11" height="8" viewBox="0 0 11 8"><rect x="0.5" y="0.5" width="10" height="7" rx="0.8" fill="#6a6a6a" stroke="#333" stroke-width="0.8"/></svg>
<svg style="left:739px;top:90px" width="10" height="6" viewBox="0 0 10 6"><path d="M1 6L1 4Q5 -1 9 4L9 6L7 6L7 4.5Q5 2 3 4.5L3 6Z" fill="#333"/></svg>
<div class="a" style="left:757px;top:88px;width:1px;height:12px;background:#d6d6d6"></div>
<svg style="left:763.6px;top:87.3px" width="12.6" height="12.2" viewBox="0 0 12.6 12.2"><rect x="0.6" y="0.6" width="11.4" height="11" fill="#e8e8e8" stroke="#c02020" stroke-width="1.2"/><path d="M2 2L10 5L8 6L10 10.5L2 10.5Z" fill="#333"/><path d="M3 10.5L6 7L9 10.5Z" fill="#fff"/></svg>
<svg style="left:783.3px;top:87.3px" width="12.6" height="12.2" viewBox="0 0 12.6 12.2"><rect x="0.6" y="0.6" width="11.4" height="11" fill="#e8e8e8" stroke="#c02020" stroke-width="1.2"/><circle cx="6.3" cy="6" r="4.2" fill="#555"/><circle cx="6.3" cy="6" r="1.9" fill="#fff"/></svg>
<svg style="left:803.2px;top:87.3px" width="12.6" height="12.2" viewBox="0 0 12.6 12.2"><rect x="0.6" y="0.6" width="11.4" height="11" fill="#e8e8e8" stroke="#c02020" stroke-width="1.2"/><circle cx="6.3" cy="6" r="4.3" fill="#555"/></svg>
<svg style="left:823.6px;top:87.3px" width="12.6" height="12.2" viewBox="0 0 12.6 12.2"><rect x="0.6" y="0.6" width="11.4" height="11" fill="#e8e8e8" stroke="#c02020" stroke-width="1.2"/><circle cx="4" cy="4" r="2.3" fill="#777"/><rect x="6.5" y="3" width="4" height="7.5" fill="#333"/><path d="M1.5 7L5 10.5L1.5 10.5Z" fill="#222"/></svg>
<div class="a" style="left:842.5px;top:88px;width:1px;height:12px;background:#d6d6d6"></div>
<svg style="left:850.8px;top:89px" width="8" height="8" viewBox="0 0 8 8"><path d="M4 0L4 8M0 4L8 4" stroke="#111" stroke-width="1.2"/></svg>
<svg style="left:871.6px;top:89.3px" width="8" height="8" viewBox="0 0 8 8"><path d="M0.5 0.5L7.5 7.5" stroke="#111" stroke-width="0.9"/></svg>
<svg style="left:889.8px;top:89px" width="12.5" height="8.5" viewBox="0 0 12.5 8.5"><path d="M0.5 1L2.5 2.5L1.5 6.5L6 3.5L8 5.5L10.5 4.5L11.8 8" fill="none" stroke="#111" stroke-width="0.9"/></svg>
<svg style="left:911px;top:89.5px" width="9.5" height="5" viewBox="0 0 9.5 5"><path d="M0.5 4.5Q4.75 -2.5 9 4.5" fill="none" stroke="#111" stroke-width="0.9"/></svg>
<div class="a" style="left:928.5px;top:88px;width:1px;height:12px;background:#d6d6d6"></div>
<svg style="left:936px;top:88.4px" width="10" height="11" viewBox="0 0 10 11"><rect x="0" y="0" width="10" height="1.2" fill="#111"/><rect x="0" y="2.4" width="10" height="1.2" fill="#111"/><rect x="0" y="4.8" width="10" height="1.2" fill="#111"/><rect x="0" y="7.2" width="10" height="1.2" fill="#111"/><rect x="0" y="9.6" width="10" height="1.2" fill="#111"/></svg>
<svg style="left:969.5px;top:92px" width="7" height="5" viewBox="0 0 7 5"><path d="M0.5 0.5L3 2.5L0.5 4.5M3.8 0.5L6.3 2.5L3.8 4.5" fill="none" stroke="#666" stroke-width="0.9"/></svg>
<svg style="left:997.7px;top:82.9px" width="11.5" height="11" viewBox="0 0 11.5 11"><defs><linearGradient id="g25" x1="0" y1="0" x2="1" y2="1"><stop offset="0" stop-color="#ffffff"/><stop offset="1" stop-color="#d8d8f4"/></linearGradient></defs><rect x="0.75" y="0.75" width="10.0" height="9.5" rx="1" fill="url(#g25)" stroke="#5aa0e0" stroke-width="1.5"/><rect x="1" y="1" width="9.5" height="2.2" fill="#5aa0e0"/><path d="M3 8.5L7 5" stroke="#222" stroke-width="1.2"/><path d="M5 4L9 3.5L8.5 7Z" fill="#f0d060"/></svg>
<svg style="left:1016.9px;top:82px" width="14" height="12.5" viewBox="0 0 14 12.5"><defs><radialGradient id="g26" cx="0.45" cy="0.4" r="0.6"><stop offset="0" stop-color="#8090e0"/><stop offset="1" stop-color="#3040a0"/></radialGradient></defs><circle cx="6" cy="5.8" r="5" fill="url(#g26)" stroke="#25303a" stroke-width="1.8"/><path d="M9.5 9.5L11 11" stroke="#25303a" stroke-width="2"/><path d="M10.5 11L14 11L12.25 12.5Z" fill="#222"/></svg>
<svg style="left:1037.7px;top:82.9px" width="12" height="11" viewBox="0 0 12 11"><defs><linearGradient id="g27" x1="0" y1="0" x2="1" y2="1"><stop offset="0" stop-color="#ffffff"/><stop offset="1" stop-color="#d8d8f4"/></linearGradient></defs><rect x="0.75" y="0.75" width="10.5" height="9.5" rx="1" fill="url(#g27)" stroke="#5aa0e0" stroke-width="1.5"/><rect x="1" y="1" width="10" height="2.2" fill="#5aa0e0"/><path d="M8.5 10.5L12 10.5L10.25 12Z" fill="#222"/></svg>
<svg style="left:1057.9px;top:82.9px" width="11" height="11" viewBox="0 0 11 11"><rect x="0.5" y="0.5" width="10" height="10" fill="#eef2f8" stroke="#98a8c0" stroke-width="0.8"/><path d="M2.5 2.5L2.5 8.5M2.5 5L5 5M2.5 8.5L5 8.5" stroke="#2a60b0" stroke-width="1"/><rect x="5.5" y="2" width="3.5" height="1.5" fill="#888"/><rect x="5.5" y="4.5" width="3.5" height="1.5" fill="#888"/><rect x="5.5" y="7.5" width="3.5" height="1.5" fill="#888"/></svg>
<svg style="left:1076.5px;top:85.5px" width="12.5" height="6" viewBox="0 0 12.5 6"><path d="M0.5 2L8 2L8 0.3L12.3 3L8 5.7L8 4L0.5 4Z" fill="#1e4a8a"/></svg>
<svg style="left:1096.7px;top:82.5px" width="13" height="12" viewBox="0 0 13 12"><path d="M0.5 1.5L8 1.5L8 0L12.5 2.8L8 5.5L8 4L6 4L6 9L7.5 9L5 11.8L2.5 9L4 9L4 4L0.5 4Z" fill="#1e4a8a"/></svg>
<svg style="left:1117.5px;top:82.5px" width="12" height="12" viewBox="0 0 12 12"><path d="M10 4A5 5 0 1 0 10.5 8L8 7.5A2.6 2.6 0 1 1 7.5 4.5L6.5 6L11.5 6L11.5 1Z" fill="#1e4a9a"/></svg>
<svg style="left:1139px;top:83px" width="10.5" height="11" viewBox="0 0 10.5 11"><path d="M0.5 0.5L7 0.5L10 3.5L10 10.5L0.5 10.5Z" fill="#f4f6fa" stroke="#98a0b0" stroke-width="0.8"/><rect x="1.5" y="6" width="7.5" height="4" fill="#b8c8e0"/></svg>
<svg style="left:1158.2px;top:85.4px" width="11.5" height="7.5" viewBox="0 0 11.5 7.5"><path d="M0.5 0.5L3 0.5L6 3.75L3 7L0.5 7L3.5 3.75ZM5.5 0.5L8 0.5L11 3.75L8 7L5.5 7L8.5 3.75Z" fill="#2a8a2a"/></svg>
<svg style="left:1179.2px;top:83px" width="9.5" height="10.5" viewBox="0 0 9.5 10.5"><path d="M4.75 0.5L9 4.5L9 6.5L4.75 2.8L0.5 6.5L0.5 4.5ZM4.75 4.5L9 8.5L9 10.5L4.75 6.8L0.5 10.5L0.5 8.5Z" fill="#b82020"/></svg>
<svg style="left:1197.9px;top:83px" width="12" height="11" viewBox="0 0 12 11"><path d="M3.5 0.3L8.5 0.3L11.8 3.5L11.8 7.5L8.5 10.7L3.5 10.7L0.2 7.5L0.2 3.5Z" fill="#e84020"/><text x="2" y="7" font-size="4" font-family="Liberation Sans" font-weight="bold" fill="#fff">STOP</text></svg>
<svg style="left:1221px;top:85.4px" width="6.5" height="6" viewBox="0 0 6.5 6"><circle cx="3.2" cy="3" r="2.8" fill="#3a90d8"/></svg>
<svg style="left:1253.3px;top:83px" width="12" height="12" viewBox="0 0 12 12"><defs><radialGradient id="g28" cx="0.4" cy="0.35" r="0.7"><stop offset="0" stop-color="#ffffff"/><stop offset="1" stop-color="#9cc8e8"/></radialGradient></defs><line x1="7" y1="7" x2="11" y2="11" stroke="#e0a060" stroke-width="2.2" stroke-linecap="round"/><circle cx="4.5" cy="4.3" r="3.8" fill="url(#g28)" stroke="#8aa8c0" stroke-width="0.8"/></svg>
<svg style="left:1272.6px;top:86.5px" width="7" height="5" viewBox="0 0 7 5"><path d="M0.5 0.5L3 2.5L0.5 4.5M3.8 0.5L6.3 2.5L3.8 4.5" fill="none" stroke="#666" stroke-width="0.9"/></svg>
<svg style="left:7.8px;top:557.8px" width="8.5" height="8.5" viewBox="0 0 8.5 8.5"><defs><radialGradient id="g29" cx="0.4" cy="0.35" r="0.65"><stop offset="0" stop-color="#80f080"/><stop offset="0.6" stop-color="#10b010"/><stop offset="1" stop-color="#0a8a0a"/></radialGradient></defs><circle cx="4.25" cy="4.25" r="3.95" fill="url(#g29)"/></svg>
<svg style="left:27.7px;top:557.8px" width="8.5" height="8.5" viewBox="0 0 8.5 8.5"><defs><radialGradient id="g30" cx="0.4" cy="0.35" r="0.65"><stop offset="0" stop-color="#ffa080"/><stop offset="0.6" stop-color="#e04020"/><stop offset="1" stop-color="#b03010"/></radialGradient></defs><circle cx="4.25" cy="4.25" r="3.95" fill="url(#g30)"/></svg>
<svg style="left:46.5px;top:556px" width="14" height="13" viewBox="0 0 14 13"><path d="M0.5 1Q5.5 -0.5 10.5 1L6.5 6L6.5 11L4.5 11.5L4.5 6Z" fill="#e8e8e8" stroke="#909090" stroke-width="0.8"/><path d="M10 10L13.5 10L11.75 12Z" fill="#333"/></svg>
<svg style="left:66.4px;top:556px" width="12" height="12" viewBox="0 0 12 12"><rect x="0.5" y="0.5" width="11" height="11" rx="1" fill="#2f66b8"/><rect x="2.5" y="1" width="7" height="4.5" fill="#e8e8e8"/><rect x="3" y="8" width="6" height="3.5" fill="#8fb2e0"/></svg>
<svg style="left:86px;top:556px" width="12" height="12" viewBox="0 0 12 12"><defs><linearGradient id="g31" x1="0" y1="0" x2="1" y2="1"><stop offset="0" stop-color="#ffffff"/><stop offset="1" stop-color="#d8d8f4"/></linearGradient></defs><rect x="0.75" y="0.75" width="10.5" height="10.5" rx="1" fill="url(#g31)" stroke="#5aa0e0" stroke-width="1.5"/><rect x="1" y="1" width="10" height="2.2" fill="#5aa0e0"/><path d="M1.5 8L5 11.5M5 8L1.5 11.5" stroke="#e03020" stroke-width="1.6"/></svg>
</body></html>
